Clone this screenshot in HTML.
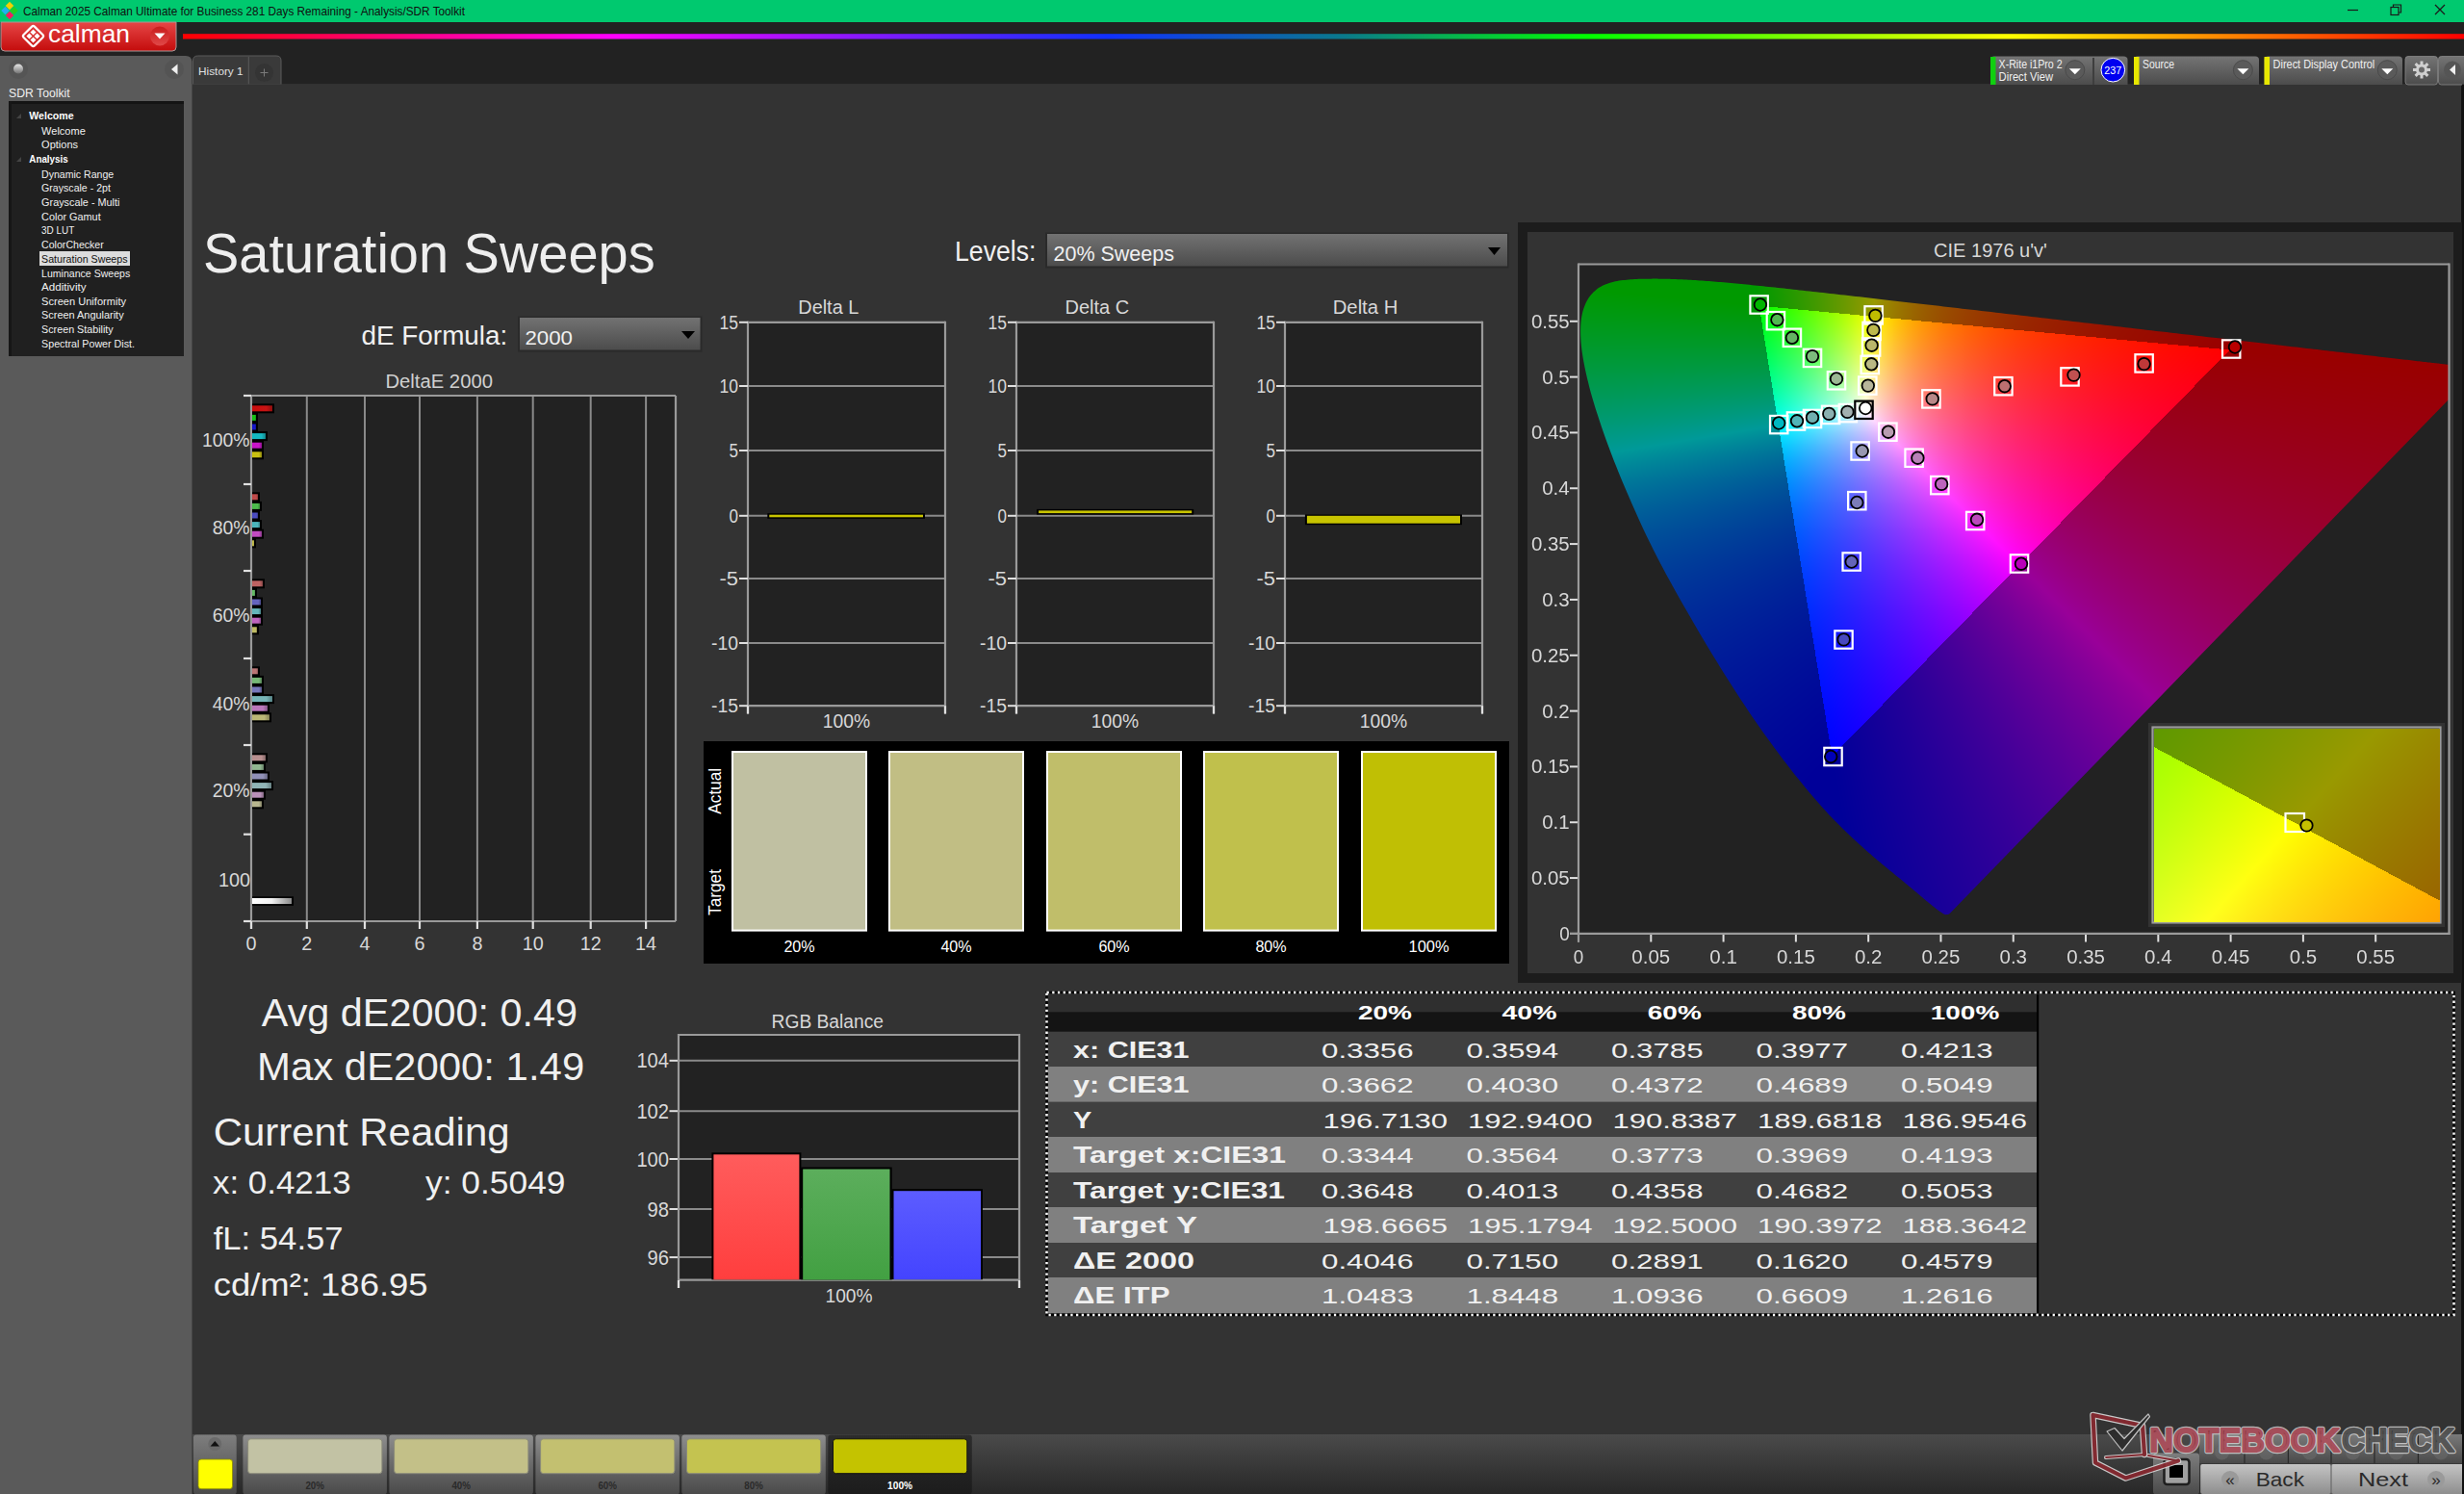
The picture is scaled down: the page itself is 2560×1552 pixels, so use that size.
<!DOCTYPE html>
<html><head><meta charset="utf-8"><title>Calman Saturation Sweeps</title>
<style>
html,body{margin:0;padding:0;width:2560px;height:1552px;overflow:hidden;background:#333;}
svg{position:absolute;left:0;top:0;}
svg text{font-family:"Liberation Sans",sans-serif;}
canvas{position:absolute;}
</style></head><body>
<svg width="2560" height="1552" viewBox="0 0 2560 1552"><defs><linearGradient id="rainbow" x1="0" y1="0" x2="1" y2="0"><stop offset="0" stop-color="#ff0000"/><stop offset="0.19" stop-color="#ff00ff"/><stop offset="0.405" stop-color="#1030ff"/><stop offset="0.51" stop-color="#0a7a8a"/><stop offset="0.616" stop-color="#00ff00"/><stop offset="0.8" stop-color="#ffff00"/><stop offset="1" stop-color="#ff0000"/></linearGradient><linearGradient id="calbtn" x1="0" y1="0" x2="0" y2="1"><stop offset="0" stop-color="#e64646"/><stop offset="1" stop-color="#c40c0c"/></linearGradient><linearGradient id="ddred" x1="0" y1="0" x2="0" y2="1"><stop offset="0" stop-color="#c81c1c"/><stop offset="1" stop-color="#e04848"/></linearGradient><linearGradient id="tbw" x1="0" y1="0" x2="0" y2="1"><stop offset="0" stop-color="#747474"/><stop offset="1" stop-color="#4c4c4c"/></linearGradient><linearGradient id="dd" x1="0" y1="0" x2="0" y2="1"><stop offset="0" stop-color="#727272"/><stop offset="1" stop-color="#4c4c4c"/></linearGradient><linearGradient id="strip" x1="0" y1="0" x2="0" y2="1"><stop offset="0" stop-color="#4a4a4a"/><stop offset="1" stop-color="#282828"/></linearGradient><linearGradient id="pbtn" x1="0" y1="0" x2="0" y2="1"><stop offset="0" stop-color="#8e8e8e"/><stop offset="0.5" stop-color="#6a6a6a"/><stop offset="1" stop-color="#4a4a4a"/></linearGradient><linearGradient id="pbtnsel" x1="0" y1="0" x2="0" y2="1"><stop offset="0" stop-color="#2c2c2c"/><stop offset="1" stop-color="#1c1c1c"/></linearGradient><linearGradient id="sbtn" x1="0" y1="0" x2="0" y2="1"><stop offset="0" stop-color="#7e7e7e"/><stop offset="1" stop-color="#4a4a4a"/></linearGradient><linearGradient id="bk" x1="0" y1="0" x2="0" y2="1"><stop offset="0" stop-color="#c4c4c4"/><stop offset="1" stop-color="#8e8e8e"/></linearGradient><linearGradient id="tbrow" x1="0" y1="0" x2="0" y2="1"><stop offset="0" stop-color="#7a7a7a"/><stop offset="1" stop-color="#4a4a4a"/></linearGradient><linearGradient id="ball" x1="0" y1="0" x2="0" y2="1"><stop offset="0" stop-color="#e8e8e8"/><stop offset="1" stop-color="#707070"/></linearGradient><linearGradient id="rbar" x1="0" y1="0" x2="0" y2="1"><stop offset="0" stop-color="#ff5c5c"/><stop offset="1" stop-color="#ff3e3e"/></linearGradient><linearGradient id="gbar" x1="0" y1="0" x2="0" y2="1"><stop offset="0" stop-color="#5cae5c"/><stop offset="1" stop-color="#42a042"/></linearGradient><linearGradient id="bbar" x1="0" y1="0" x2="0" y2="1"><stop offset="0" stop-color="#5c5cff"/><stop offset="1" stop-color="#4444ff"/></linearGradient><linearGradient id="bg0_0" x1="0" y1="0" x2="1" y2="0"><stop offset="0" stop-color="#c90c0c"/><stop offset="0.7" stop-color="#c81414"/><stop offset="1" stop-color="#900e0e"/></linearGradient><linearGradient id="bg0_1" x1="0" y1="0" x2="1" y2="0"><stop offset="0" stop-color="#10c010"/><stop offset="0.7" stop-color="#18c018"/><stop offset="1" stop-color="#118a11"/></linearGradient><linearGradient id="bg0_2" x1="0" y1="0" x2="1" y2="0"><stop offset="0" stop-color="#1010c9"/><stop offset="0.7" stop-color="#1818c8"/><stop offset="1" stop-color="#111190"/></linearGradient><linearGradient id="bg0_3" x1="0" y1="0" x2="1" y2="0"><stop offset="0" stop-color="#10b8c0"/><stop offset="0.7" stop-color="#18b8c0"/><stop offset="1" stop-color="#11848a"/></linearGradient><linearGradient id="bg0_4" x1="0" y1="0" x2="1" y2="0"><stop offset="0" stop-color="#c910c9"/><stop offset="0.7" stop-color="#c818c8"/><stop offset="1" stop-color="#901190"/></linearGradient><linearGradient id="bg0_5" x1="0" y1="0" x2="1" y2="0"><stop offset="0" stop-color="#c9c00c"/><stop offset="0.7" stop-color="#c8c014"/><stop offset="1" stop-color="#908a0e"/></linearGradient><linearGradient id="bg1_0" x1="0" y1="0" x2="1" y2="0"><stop offset="0" stop-color="#c14646"/><stop offset="0.7" stop-color="#c14c4c"/><stop offset="1" stop-color="#8a3636"/></linearGradient><linearGradient id="bg1_1" x1="0" y1="0" x2="1" y2="0"><stop offset="0" stop-color="#48bb48"/><stop offset="0.7" stop-color="#4ebb4e"/><stop offset="1" stop-color="#388638"/></linearGradient><linearGradient id="bg1_2" x1="0" y1="0" x2="1" y2="0"><stop offset="0" stop-color="#4848c1"/><stop offset="0.7" stop-color="#4e4ec1"/><stop offset="1" stop-color="#38388a"/></linearGradient><linearGradient id="bg1_3" x1="0" y1="0" x2="1" y2="0"><stop offset="0" stop-color="#48b6bb"/><stop offset="0.7" stop-color="#4eb6bb"/><stop offset="1" stop-color="#388386"/></linearGradient><linearGradient id="bg1_4" x1="0" y1="0" x2="1" y2="0"><stop offset="0" stop-color="#c148c1"/><stop offset="0.7" stop-color="#c14ec1"/><stop offset="1" stop-color="#8a388a"/></linearGradient><linearGradient id="bg1_5" x1="0" y1="0" x2="1" y2="0"><stop offset="0" stop-color="#c1bb46"/><stop offset="0.7" stop-color="#c1bb4c"/><stop offset="1" stop-color="#8a8636"/></linearGradient><linearGradient id="bg2_0" x1="0" y1="0" x2="1" y2="0"><stop offset="0" stop-color="#be6060"/><stop offset="0.7" stop-color="#be6464"/><stop offset="1" stop-color="#884848"/></linearGradient><linearGradient id="bg2_1" x1="0" y1="0" x2="1" y2="0"><stop offset="0" stop-color="#62ba62"/><stop offset="0.7" stop-color="#66ba66"/><stop offset="1" stop-color="#498549"/></linearGradient><linearGradient id="bg2_2" x1="0" y1="0" x2="1" y2="0"><stop offset="0" stop-color="#6262be"/><stop offset="0.7" stop-color="#6666be"/><stop offset="1" stop-color="#494988"/></linearGradient><linearGradient id="bg2_3" x1="0" y1="0" x2="1" y2="0"><stop offset="0" stop-color="#62b6ba"/><stop offset="0.7" stop-color="#66b6ba"/><stop offset="1" stop-color="#498385"/></linearGradient><linearGradient id="bg2_4" x1="0" y1="0" x2="1" y2="0"><stop offset="0" stop-color="#be62be"/><stop offset="0.7" stop-color="#be66be"/><stop offset="1" stop-color="#884988"/></linearGradient><linearGradient id="bg2_5" x1="0" y1="0" x2="1" y2="0"><stop offset="0" stop-color="#beba60"/><stop offset="0.7" stop-color="#beba64"/><stop offset="1" stop-color="#888548"/></linearGradient><linearGradient id="bg3_0" x1="0" y1="0" x2="1" y2="0"><stop offset="0" stop-color="#bb7373"/><stop offset="0.7" stop-color="#bb7777"/><stop offset="1" stop-color="#865555"/></linearGradient><linearGradient id="bg3_1" x1="0" y1="0" x2="1" y2="0"><stop offset="0" stop-color="#75b875"/><stop offset="0.7" stop-color="#78b878"/><stop offset="1" stop-color="#568456"/></linearGradient><linearGradient id="bg3_2" x1="0" y1="0" x2="1" y2="0"><stop offset="0" stop-color="#7575bb"/><stop offset="0.7" stop-color="#7878bb"/><stop offset="1" stop-color="#565686"/></linearGradient><linearGradient id="bg3_3" x1="0" y1="0" x2="1" y2="0"><stop offset="0" stop-color="#75b5b8"/><stop offset="0.7" stop-color="#78b5b8"/><stop offset="1" stop-color="#568284"/></linearGradient><linearGradient id="bg3_4" x1="0" y1="0" x2="1" y2="0"><stop offset="0" stop-color="#bb75bb"/><stop offset="0.7" stop-color="#bb78bb"/><stop offset="1" stop-color="#865686"/></linearGradient><linearGradient id="bg3_5" x1="0" y1="0" x2="1" y2="0"><stop offset="0" stop-color="#bbb873"/><stop offset="0.7" stop-color="#bbb877"/><stop offset="1" stop-color="#868455"/></linearGradient><linearGradient id="bg4_0" x1="0" y1="0" x2="1" y2="0"><stop offset="0" stop-color="#b88e8e"/><stop offset="0.7" stop-color="#b89090"/><stop offset="1" stop-color="#846767"/></linearGradient><linearGradient id="bg4_1" x1="0" y1="0" x2="1" y2="0"><stop offset="0" stop-color="#8fb68f"/><stop offset="0.7" stop-color="#91b691"/><stop offset="1" stop-color="#688368"/></linearGradient><linearGradient id="bg4_2" x1="0" y1="0" x2="1" y2="0"><stop offset="0" stop-color="#8f8fb8"/><stop offset="0.7" stop-color="#9191b8"/><stop offset="1" stop-color="#686884"/></linearGradient><linearGradient id="bg4_3" x1="0" y1="0" x2="1" y2="0"><stop offset="0" stop-color="#8fb4b6"/><stop offset="0.7" stop-color="#91b4b6"/><stop offset="1" stop-color="#688183"/></linearGradient><linearGradient id="bg4_4" x1="0" y1="0" x2="1" y2="0"><stop offset="0" stop-color="#b88fb8"/><stop offset="0.7" stop-color="#b891b8"/><stop offset="1" stop-color="#846884"/></linearGradient><linearGradient id="bg4_5" x1="0" y1="0" x2="1" y2="0"><stop offset="0" stop-color="#b8b68e"/><stop offset="0.7" stop-color="#b8b690"/><stop offset="1" stop-color="#848367"/></linearGradient><linearGradient id="greybar" x1="0" y1="0" x2="1" y2="0"><stop offset="0" stop-color="#ffffff"/><stop offset="0.5" stop-color="#f0f0f0"/><stop offset="1" stop-color="#8a8a8a"/></linearGradient></defs><rect x="0" y="0" width="2560" height="1552" fill="#333333" />
<rect x="0" y="0" width="2560" height="23" fill="#00c96f" />
<rect x="0" y="23" width="2560" height="64" fill="#222222" />
<g><rect x="7" y="3" width="6" height="6" fill="#f2d000" transform="rotate(45 10 6)"/><rect x="2.5" y="8" width="6" height="6" fill="#22b0f0" transform="rotate(45 5.5 11)"/><rect x="11.5" y="8" width="6" height="6" fill="#20d020" transform="rotate(45 14.5 11)"/><rect x="7" y="13" width="6" height="6" fill="#f02060" transform="rotate(45 10 16)"/></g>
<text x="24" y="16" font-size="13" fill="#101010" textLength="459" lengthAdjust="spacingAndGlyphs" >Calman 2025 Calman Ultimate for Business 281 Days Remaining  - Analysis/SDR Toolkit</text>
<line x1="2439" y1="10.5" x2="2450" y2="10.5" stroke="#1a1a1a" stroke-width="1.2" />
<rect x="2484" y="7.5" width="8" height="8" fill="none" stroke="#1a1a1a" stroke-width="1.2"/><path d="M2486.5 7.5 V5 H2494.5 V13 H2492" fill="none" stroke="#1a1a1a" stroke-width="1.2"/>
<path d="M2530 5 L2540 15 M2540 5 L2530 15" stroke="#1a1a1a" stroke-width="1.3"/>
<path d="M1 23 H183 V49 Q183 53 179 53 H5 Q1 53 1 49 Z" fill="url(#calbtn)" stroke="#a89898" stroke-width="1"/>
<g transform="translate(34.5,37.5) rotate(45)" fill="none" stroke="#fff" stroke-width="2.2"><rect x="-8" y="-8" width="16" height="16" rx="2"/></g>
<g transform="translate(34.5,37.5) rotate(45)" fill="#fff"><rect x="-5" y="-5" width="4.3" height="4.3"/><rect x="0.7" y="-5" width="4.3" height="4.3"/><rect x="-5" y="0.7" width="4.3" height="4.3"/><rect x="0.7" y="0.7" width="4.3" height="4.3"/></g>
<text x="50" y="43.7" font-size="26" fill="#ffffff" textLength="85" lengthAdjust="spacingAndGlyphs" >calman</text>
<circle cx="166" cy="37.5" r="10" fill="url(#ddred)"/><path d="M160.5 34.5 H171.5 L166 40.5 Z" fill="#fff"/>
<rect x="190" y="35.2" width="2370" height="5.3" fill="url(#rainbow)" />
<path d="M0 58 H193 Q199 58 199.5 64 V1552 H0 Z" fill="#5a5a5a"/>
<circle cx="19" cy="72" r="10" fill="#555"/><circle cx="19" cy="71.5" r="5" fill="url(#ball)"/>
<circle cx="181" cy="72" r="10" fill="#545454"/><path d="M178 72 L184.5 66.5 V77.5 Z" fill="#f0f0f0"/>
<text x="9" y="100.6" font-size="12.5" fill="#f0f0f0" textLength="63.7" lengthAdjust="spacingAndGlyphs" >SDR Toolkit</text>
<rect x="9" y="105" width="182" height="265" fill="#202020" />
<rect x="9" y="105" width="182" height="3" fill="#141414" />
<rect x="9" y="105" width="3" height="265" fill="#161616" />
<path d="M17 123 L22 118 V123 Z" fill="#444"/><path d="M17 168 L22 163 V168 Z" fill="#444"/>
<text x="30.3" y="124.3" font-size="10.5" fill="#ffffff" font-weight="bold" textLength="46.4" lengthAdjust="spacingAndGlyphs" >Welcome</text>
<text x="43.1" y="140" font-size="10.5" fill="#f0f0f0" textLength="45.7" lengthAdjust="spacingAndGlyphs" >Welcome</text>
<text x="43.1" y="154.2" font-size="10.5" fill="#f0f0f0" textLength="37.9" lengthAdjust="spacingAndGlyphs" >Options</text>
<text x="30.3" y="169.2" font-size="10.5" fill="#ffffff" font-weight="bold" textLength="40.4" lengthAdjust="spacingAndGlyphs" >Analysis</text>
<text x="43.1" y="185" font-size="10.5" fill="#f0f0f0" textLength="75.1" lengthAdjust="spacingAndGlyphs" >Dynamic Range</text>
<text x="43.1" y="199.2" font-size="10.5" fill="#f0f0f0" textLength="71.8" lengthAdjust="spacingAndGlyphs" >Grayscale - 2pt</text>
<text x="43.1" y="214.3" font-size="10.5" fill="#f0f0f0" textLength="81.3" lengthAdjust="spacingAndGlyphs" >Grayscale - Multi</text>
<text x="43.1" y="228.8" font-size="10.5" fill="#f0f0f0" textLength="61.6" lengthAdjust="spacingAndGlyphs" >Color Gamut</text>
<text x="43.1" y="243.3" font-size="10.5" fill="#f0f0f0" textLength="34.2" lengthAdjust="spacingAndGlyphs" >3D LUT</text>
<text x="43.1" y="258.2" font-size="10.5" fill="#f0f0f0" textLength="64.7" lengthAdjust="spacingAndGlyphs" >ColorChecker</text>
<rect x="41" y="261" width="94" height="15" fill="#dcdcdc" />
<text x="43.1" y="273" font-size="10.5" fill="#101010" textLength="89.4" lengthAdjust="spacingAndGlyphs" >Saturation Sweeps</text>
<text x="43.1" y="287.5" font-size="10.5" fill="#f0f0f0" textLength="92.1" lengthAdjust="spacingAndGlyphs" >Luminance Sweeps</text>
<text x="43.1" y="302.4" font-size="10.5" fill="#f0f0f0" textLength="46.4" lengthAdjust="spacingAndGlyphs" >Additivity</text>
<text x="43.1" y="316.8" font-size="10.5" fill="#f0f0f0" textLength="87.9" lengthAdjust="spacingAndGlyphs" >Screen Uniformity</text>
<text x="43.1" y="331.2" font-size="10.5" fill="#f0f0f0" textLength="85.5" lengthAdjust="spacingAndGlyphs" >Screen Angularity</text>
<text x="43.1" y="345.9" font-size="10.5" fill="#f0f0f0" textLength="74.6" lengthAdjust="spacingAndGlyphs" >Screen Stability</text>
<text x="43.1" y="360.7" font-size="10.5" fill="#f0f0f0" textLength="96.9" lengthAdjust="spacingAndGlyphs" >Spectral Power Dist.</text>
<path d="M200.5 88 V63 Q200.5 58 205.5 58 H287 Q292 58 292 63 V88 Z" fill="#3a3a3a" stroke="#5a5a5a" stroke-width="1"/>
<line x1="258.3" y1="59" x2="258.3" y2="88" stroke="#5a5a5a" stroke-width="1" />
<text x="206.1" y="77.8" font-size="11.5" fill="#e0e0e0" textLength="46.5" lengthAdjust="spacingAndGlyphs" >History 1</text>
<circle cx="274.5" cy="75.5" r="9.5" fill="#343434"/><path d="M270.5 75.5 H278.5 M274.5 71.5 V79.5" stroke="#7a7a7a" stroke-width="1"/>
<rect x="200" y="87.5" width="2360" height="1465" fill="#333333" />
<rect x="2557" y="87.5" width="3" height="1465" fill="#141414" />
<path d="M2068 88 V62 Q2068 58.5 2072 58.5 H2206 Q2210.5 58.5 2210.5 62 V88 Z" fill="url(#tbw)"/>
<rect x="2068" y="59" width="5.5" height="29" fill="#10d010" />
<text x="2076.6" y="70.6" font-size="12.5" fill="#f0f0f0" textLength="66" lengthAdjust="spacingAndGlyphs" >X-Rite i1Pro 2</text>
<text x="2076.6" y="84.4" font-size="12.5" fill="#f0f0f0" textLength="56.4" lengthAdjust="spacingAndGlyphs" >Direct View</text>
<circle cx="2155.8" cy="72.7" r="10" fill="#5a5a5a" stroke="#4a4a4a" stroke-width="1"/><path d="M2149.8 71.2 H2161.8 L2155.8 77.2 Z" fill="#fff"/>
<line x1="2175" y1="60" x2="2175" y2="88" stroke="#3e3e3e" stroke-width="2" />
<circle cx="2195.3" cy="72.7" r="12.3" fill="#0000f0" stroke="#ffffff" stroke-width="1"/>
<text x="2195.3" y="77" font-size="11" fill="#ffffff" text-anchor="middle" textLength="18" lengthAdjust="spacingAndGlyphs" >237</text>
<path d="M2217 88 V62 Q2217 58.5 2221 58.5 H2343 Q2347 58.5 2347 62 V88 Z" fill="url(#tbw)"/>
<rect x="2217" y="59" width="5.5" height="29" fill="#e8e800" />
<text x="2226" y="70.6" font-size="12.5" fill="#f0f0f0" textLength="33" lengthAdjust="spacingAndGlyphs" >Source</text>
<circle cx="2330.4" cy="72.7" r="10" fill="#5a5a5a" stroke="#4a4a4a" stroke-width="1"/><path d="M2324.4 71.2 H2336.4 L2330.4 77.2 Z" fill="#fff"/>
<path d="M2352.5 88 V62 Q2352.5 58.5 2356.5 58.5 H2492 Q2496 58.5 2496 62 V88 Z" fill="url(#tbw)"/>
<rect x="2352.5" y="59" width="5.5" height="29" fill="#e8e800" />
<text x="2361.6" y="70.6" font-size="12.5" fill="#f0f0f0" textLength="105.7" lengthAdjust="spacingAndGlyphs" >Direct Display Control</text>
<circle cx="2480.3" cy="72.7" r="10" fill="#5a5a5a" stroke="#4a4a4a" stroke-width="1"/><path d="M2474.3 71.2 H2486.3 L2480.3 77.2 Z" fill="#fff"/>
<rect x="2499" y="58.5" width="33.5" height="29.5" rx="3" fill="url(#tbw)" stroke="#888" stroke-width="0.8"/>
<g transform="translate(2516,72.5)" fill="#d0d0d0"><circle r="6"/><g stroke="#d0d0d0" stroke-width="3"><line x1="0" y1="-9" x2="0" y2="9"/><line x1="-9" y1="0" x2="9" y2="0"/><line x1="-6.4" y1="-6.4" x2="6.4" y2="6.4"/><line x1="-6.4" y1="6.4" x2="6.4" y2="-6.4"/></g><circle r="3" fill="#6a6a6a"/></g>
<rect x="2533.5" y="58.5" width="30" height="29.5" rx="3" fill="url(#tbw)" stroke="#888" stroke-width="0.8"/>
<circle cx="2548" cy="72.5" r="9" fill="#555"/><path d="M2545 72.5 L2551 67 V78 Z" fill="#f0f0f0"/>
<text x="211" y="282.5" font-size="57" fill="#eeeeee" textLength="469.7" lengthAdjust="spacingAndGlyphs" >Saturation Sweeps</text>
<text x="992" y="271.4" font-size="29" fill="#f0f0f0" textLength="84.4" lengthAdjust="spacingAndGlyphs" >Levels:</text>
<rect x="1086" y="241.5" width="481.5" height="37" fill="#2a2a2a" />
<rect x="1088" y="243" width="478" height="33.5" fill="url(#dd)" />
<text x="1094.5" y="271.2" font-size="21.8" fill="#f0f0f0" textLength="125.5" lengthAdjust="spacingAndGlyphs" >20% Sweeps</text>
<path d="M1546 257 H1559 L1552.5 265 Z" fill="#000"/>
<text x="375.5" y="357.5" font-size="27" fill="#f0f0f0" textLength="151.8" lengthAdjust="spacingAndGlyphs" >dE Formula:</text>
<rect x="538" y="328.6" width="191.5" height="37" fill="#2a2a2a" />
<rect x="540" y="330" width="187.5" height="33.5" fill="url(#dd)" />
<text x="545.5" y="357.5" font-size="20.7" fill="#f0f0f0" textLength="49.5" lengthAdjust="spacingAndGlyphs" >2000</text>
<path d="M708 344 H722 L715 352 Z" fill="#000"/>
<text x="456.2" y="402.5" font-size="20" fill="#d0d0d0" text-anchor="middle" textLength="111.5" lengthAdjust="spacingAndGlyphs" >DeltaE 2000</text>
<rect x="261" y="411" width="441" height="546" fill="#222222" />
<line x1="318.8" y1="411" x2="318.8" y2="957" stroke="#8a8a8a" stroke-width="2" />
<line x1="379" y1="411" x2="379" y2="957" stroke="#8a8a8a" stroke-width="2" />
<line x1="436" y1="411" x2="436" y2="957" stroke="#8a8a8a" stroke-width="2" />
<line x1="495.9" y1="411" x2="495.9" y2="957" stroke="#8a8a8a" stroke-width="2" />
<line x1="553.7" y1="411" x2="553.7" y2="957" stroke="#8a8a8a" stroke-width="2" />
<line x1="613.7" y1="411" x2="613.7" y2="957" stroke="#8a8a8a" stroke-width="2" />
<line x1="671.1" y1="411" x2="671.1" y2="957" stroke="#8a8a8a" stroke-width="2" />
<line x1="261" y1="411" x2="702" y2="411" stroke="#9a9a9a" stroke-width="2.2" />
<line x1="702" y1="411" x2="702" y2="957" stroke="#9a9a9a" stroke-width="2.2" />
<line x1="253" y1="957" x2="702" y2="957" stroke="#9a9a9a" stroke-width="2.2" />
<line x1="261" y1="410" x2="261" y2="965" stroke="#9a9a9a" stroke-width="2.2" />
<line x1="253" y1="411" x2="261" y2="411" stroke="#e0e0e0" stroke-width="2.2" />
<line x1="253" y1="503" x2="261" y2="503" stroke="#e0e0e0" stroke-width="2.2" />
<line x1="253" y1="593" x2="261" y2="593" stroke="#e0e0e0" stroke-width="2.2" />
<line x1="253" y1="684" x2="261" y2="684" stroke="#e0e0e0" stroke-width="2.2" />
<line x1="253" y1="774" x2="261" y2="774" stroke="#e0e0e0" stroke-width="2.2" />
<line x1="253" y1="866.7" x2="261" y2="866.7" stroke="#e0e0e0" stroke-width="2.2" />
<line x1="253" y1="957" x2="261" y2="957" stroke="#e0e0e0" stroke-width="2.2" />
<line x1="261" y1="957" x2="261" y2="965" stroke="#e0e0e0" stroke-width="2.2" />
<text x="261" y="986.6" font-size="20" fill="#d8d8d8" text-anchor="middle" textLength="11" lengthAdjust="spacingAndGlyphs" >0</text>
<line x1="318.8" y1="957" x2="318.8" y2="965" stroke="#e0e0e0" stroke-width="2.2" />
<text x="318.8" y="986.6" font-size="20" fill="#d8d8d8" text-anchor="middle" textLength="11" lengthAdjust="spacingAndGlyphs" >2</text>
<line x1="379" y1="957" x2="379" y2="965" stroke="#e0e0e0" stroke-width="2.2" />
<text x="379" y="986.6" font-size="20" fill="#d8d8d8" text-anchor="middle" textLength="11" lengthAdjust="spacingAndGlyphs" >4</text>
<line x1="436" y1="957" x2="436" y2="965" stroke="#e0e0e0" stroke-width="2.2" />
<text x="436" y="986.6" font-size="20" fill="#d8d8d8" text-anchor="middle" textLength="11" lengthAdjust="spacingAndGlyphs" >6</text>
<line x1="495.9" y1="957" x2="495.9" y2="965" stroke="#e0e0e0" stroke-width="2.2" />
<text x="495.9" y="986.6" font-size="20" fill="#d8d8d8" text-anchor="middle" textLength="11" lengthAdjust="spacingAndGlyphs" >8</text>
<line x1="553.7" y1="957" x2="553.7" y2="965" stroke="#e0e0e0" stroke-width="2.2" />
<text x="553.7" y="986.6" font-size="20" fill="#d8d8d8" text-anchor="middle" textLength="22" lengthAdjust="spacingAndGlyphs" >10</text>
<line x1="613.7" y1="957" x2="613.7" y2="965" stroke="#e0e0e0" stroke-width="2.2" />
<text x="613.7" y="986.6" font-size="20" fill="#d8d8d8" text-anchor="middle" textLength="22" lengthAdjust="spacingAndGlyphs" >12</text>
<line x1="671.1" y1="957" x2="671.1" y2="965" stroke="#e0e0e0" stroke-width="2.2" />
<text x="671.1" y="986.6" font-size="20" fill="#d8d8d8" text-anchor="middle" textLength="22" lengthAdjust="spacingAndGlyphs" >14</text>
<text x="259.6" y="463.6" font-size="20.5" fill="#d8d8d8" text-anchor="end" textLength="49.6" lengthAdjust="spacingAndGlyphs" >100%</text>
<text x="259.6" y="554.9" font-size="20.5" fill="#d8d8d8" text-anchor="end" textLength="38.9" lengthAdjust="spacingAndGlyphs" >80%</text>
<text x="259.6" y="646.3" font-size="20.5" fill="#d8d8d8" text-anchor="end" textLength="38.9" lengthAdjust="spacingAndGlyphs" >60%</text>
<text x="259.6" y="737.8" font-size="20.5" fill="#d8d8d8" text-anchor="end" textLength="38.9" lengthAdjust="spacingAndGlyphs" >40%</text>
<text x="259.6" y="827.7" font-size="20.5" fill="#d8d8d8" text-anchor="end" textLength="38.9" lengthAdjust="spacingAndGlyphs" >20%</text>
<text x="260" y="921" font-size="20.5" fill="#d8d8d8" text-anchor="end" textLength="33.1" lengthAdjust="spacingAndGlyphs" >100</text>
<rect x="262" y="419.3" width="23" height="10" fill="#000" />
<rect x="262" y="428.9" width="6" height="10" fill="#000" />
<rect x="262" y="438.5" width="6" height="10" fill="#000" />
<rect x="262" y="448.1" width="16" height="10" fill="#000" />
<rect x="262" y="457.7" width="12" height="10" fill="#000" />
<rect x="262" y="467.3" width="12" height="10" fill="#000" />
<rect x="262" y="421.3" width="21" height="6" fill="url(#bg0_0)" />
<rect x="262" y="430.9" width="4" height="6" fill="url(#bg0_1)" />
<rect x="262" y="440.5" width="4" height="6" fill="url(#bg0_2)" />
<rect x="262" y="450.1" width="14" height="6" fill="url(#bg0_3)" />
<rect x="262" y="459.7" width="10" height="6" fill="url(#bg0_4)" />
<rect x="262" y="469.3" width="10" height="6" fill="url(#bg0_5)" />
<rect x="262" y="511.3" width="8" height="10" fill="#000" />
<rect x="262" y="520.9" width="10" height="10" fill="#000" />
<rect x="262" y="530.5" width="8" height="10" fill="#000" />
<rect x="262" y="540.1" width="10" height="10" fill="#000" />
<rect x="262" y="549.7" width="12" height="10" fill="#000" />
<rect x="262" y="559.3" width="4" height="10" fill="#000" />
<rect x="262" y="513.3" width="6" height="6" fill="url(#bg1_0)" />
<rect x="262" y="522.9" width="8" height="6" fill="url(#bg1_1)" />
<rect x="262" y="532.5" width="6" height="6" fill="url(#bg1_2)" />
<rect x="262" y="542.1" width="8" height="6" fill="url(#bg1_3)" />
<rect x="262" y="551.7" width="10" height="6" fill="url(#bg1_4)" />
<rect x="262" y="561.3" width="2" height="6" fill="url(#bg1_5)" />
<rect x="262" y="601.3" width="13" height="10" fill="#000" />
<rect x="262" y="610.9" width="5" height="10" fill="#000" />
<rect x="262" y="620.5" width="11" height="10" fill="#000" />
<rect x="262" y="630.1" width="11" height="10" fill="#000" />
<rect x="262" y="639.7" width="11" height="10" fill="#000" />
<rect x="262" y="649.3" width="7" height="10" fill="#000" />
<rect x="262" y="603.3" width="11" height="6" fill="url(#bg2_0)" />
<rect x="262" y="612.9" width="3" height="6" fill="url(#bg2_1)" />
<rect x="262" y="622.5" width="9" height="6" fill="url(#bg2_2)" />
<rect x="262" y="632.1" width="9" height="6" fill="url(#bg2_3)" />
<rect x="262" y="641.7" width="9" height="6" fill="url(#bg2_4)" />
<rect x="262" y="651.3" width="5" height="6" fill="url(#bg2_5)" />
<rect x="262" y="692.3" width="8" height="10" fill="#000" />
<rect x="262" y="701.9" width="12" height="10" fill="#000" />
<rect x="262" y="711.5" width="12" height="10" fill="#000" />
<rect x="262" y="721.1" width="23" height="10" fill="#000" />
<rect x="262" y="730.7" width="18" height="10" fill="#000" />
<rect x="262" y="740.3" width="20" height="10" fill="#000" />
<rect x="262" y="694.3" width="6" height="6" fill="url(#bg3_0)" />
<rect x="262" y="703.9" width="10" height="6" fill="url(#bg3_1)" />
<rect x="262" y="713.5" width="10" height="6" fill="url(#bg3_2)" />
<rect x="262" y="723.1" width="21" height="6" fill="url(#bg3_3)" />
<rect x="262" y="732.7" width="16" height="6" fill="url(#bg3_4)" />
<rect x="262" y="742.3" width="18" height="6" fill="url(#bg3_5)" />
<rect x="262" y="782.3" width="16" height="10" fill="#000" />
<rect x="262" y="791.9" width="14" height="10" fill="#000" />
<rect x="262" y="801.5" width="18" height="10" fill="#000" />
<rect x="262" y="811.1" width="22" height="10" fill="#000" />
<rect x="262" y="820.7" width="14" height="10" fill="#000" />
<rect x="262" y="830.3" width="12" height="10" fill="#000" />
<rect x="262" y="784.3" width="14" height="6" fill="url(#bg4_0)" />
<rect x="262" y="793.9" width="12" height="6" fill="url(#bg4_1)" />
<rect x="262" y="803.5" width="16" height="6" fill="url(#bg4_2)" />
<rect x="262" y="813.1" width="20" height="6" fill="url(#bg4_3)" />
<rect x="262" y="822.7" width="12" height="6" fill="url(#bg4_4)" />
<rect x="262" y="832.3" width="10" height="6" fill="url(#bg4_5)" />
<rect x="262" y="931.3" width="43" height="9.5" fill="#000" />
<rect x="262" y="933" width="41" height="6" fill="url(#greybar)" />
<text x="860.8" y="326.1" font-size="20.5" fill="#d8d8d8" text-anchor="middle" textLength="63" lengthAdjust="spacingAndGlyphs" >Delta L</text>
<rect x="777" y="334.8" width="205" height="398.4" fill="#222222" />
<line x1="777" y1="401" x2="982" y2="401" stroke="#8a8a8a" stroke-width="2" />
<line x1="777" y1="468" x2="982" y2="468" stroke="#8a8a8a" stroke-width="2" />
<line x1="777" y1="535.8" x2="982" y2="535.8" stroke="#8a8a8a" stroke-width="2" />
<line x1="777" y1="601" x2="982" y2="601" stroke="#8a8a8a" stroke-width="2" />
<line x1="777" y1="668" x2="982" y2="668" stroke="#8a8a8a" stroke-width="2" />
<line x1="777" y1="334.8" x2="982" y2="334.8" stroke="#9a9a9a" stroke-width="2.2" />
<line x1="777" y1="733.2" x2="982" y2="733.2" stroke="#9a9a9a" stroke-width="2.2" />
<line x1="777" y1="333.7" x2="777" y2="741.5" stroke="#9a9a9a" stroke-width="2.2" />
<line x1="982" y1="333.7" x2="982" y2="741.5" stroke="#9a9a9a" stroke-width="2.2" />
<line x1="777" y1="733.2" x2="777" y2="741.5" stroke="#e0e0e0" stroke-width="2.2" />
<line x1="982" y1="733.2" x2="982" y2="741.5" stroke="#e0e0e0" stroke-width="2.2" />
<line x1="768" y1="334.8" x2="777" y2="334.8" stroke="#e0e0e0" stroke-width="2" />
<text x="767" y="341.8" font-size="19.5" fill="#d8d8d8" text-anchor="end" textLength="19.5" lengthAdjust="spacingAndGlyphs" >15</text>
<line x1="768" y1="401" x2="777" y2="401" stroke="#e0e0e0" stroke-width="2" />
<text x="767" y="408" font-size="19.5" fill="#d8d8d8" text-anchor="end" textLength="19.5" lengthAdjust="spacingAndGlyphs" >10</text>
<line x1="768" y1="468" x2="777" y2="468" stroke="#e0e0e0" stroke-width="2" />
<text x="767" y="475" font-size="19.5" fill="#d8d8d8" text-anchor="end" textLength="9.5" lengthAdjust="spacingAndGlyphs" >5</text>
<line x1="768" y1="535.8" x2="777" y2="535.8" stroke="#e0e0e0" stroke-width="2" />
<text x="767" y="542.8" font-size="19.5" fill="#d8d8d8" text-anchor="end" textLength="9.5" lengthAdjust="spacingAndGlyphs" >0</text>
<line x1="768" y1="601" x2="777" y2="601" stroke="#e0e0e0" stroke-width="2" />
<text x="767" y="608" font-size="19.5" fill="#d8d8d8" text-anchor="end" textLength="19.5" lengthAdjust="spacingAndGlyphs" >-5</text>
<line x1="768" y1="668" x2="777" y2="668" stroke="#e0e0e0" stroke-width="2" />
<text x="767" y="675" font-size="19.5" fill="#d8d8d8" text-anchor="end" textLength="28" lengthAdjust="spacingAndGlyphs" >-10</text>
<line x1="768" y1="733.2" x2="777" y2="733.2" stroke="#e0e0e0" stroke-width="2" />
<text x="767" y="740.2" font-size="19.5" fill="#d8d8d8" text-anchor="end" textLength="28" lengthAdjust="spacingAndGlyphs" >-15</text>
<text x="879.5" y="755.5" font-size="20.4" fill="#d8d8d8" text-anchor="middle" textLength="49.3" lengthAdjust="spacingAndGlyphs" >100%</text>
<rect x="797.3" y="533.2" width="163.7" height="5.6" fill="#000" />
<rect x="799.3" y="534.7" width="159.7" height="2.6" fill="#c8c400" />
<text x="1139.8" y="326.1" font-size="20.5" fill="#d8d8d8" text-anchor="middle" textLength="66.7" lengthAdjust="spacingAndGlyphs" >Delta C</text>
<rect x="1056" y="334.8" width="205" height="398.4" fill="#222222" />
<line x1="1056" y1="401" x2="1261" y2="401" stroke="#8a8a8a" stroke-width="2" />
<line x1="1056" y1="468" x2="1261" y2="468" stroke="#8a8a8a" stroke-width="2" />
<line x1="1056" y1="535.8" x2="1261" y2="535.8" stroke="#8a8a8a" stroke-width="2" />
<line x1="1056" y1="601" x2="1261" y2="601" stroke="#8a8a8a" stroke-width="2" />
<line x1="1056" y1="668" x2="1261" y2="668" stroke="#8a8a8a" stroke-width="2" />
<line x1="1056" y1="334.8" x2="1261" y2="334.8" stroke="#9a9a9a" stroke-width="2.2" />
<line x1="1056" y1="733.2" x2="1261" y2="733.2" stroke="#9a9a9a" stroke-width="2.2" />
<line x1="1056" y1="333.7" x2="1056" y2="741.5" stroke="#9a9a9a" stroke-width="2.2" />
<line x1="1261" y1="333.7" x2="1261" y2="741.5" stroke="#9a9a9a" stroke-width="2.2" />
<line x1="1056" y1="733.2" x2="1056" y2="741.5" stroke="#e0e0e0" stroke-width="2.2" />
<line x1="1261" y1="733.2" x2="1261" y2="741.5" stroke="#e0e0e0" stroke-width="2.2" />
<line x1="1047" y1="334.8" x2="1056" y2="334.8" stroke="#e0e0e0" stroke-width="2" />
<text x="1046" y="341.8" font-size="19.5" fill="#d8d8d8" text-anchor="end" textLength="19.5" lengthAdjust="spacingAndGlyphs" >15</text>
<line x1="1047" y1="401" x2="1056" y2="401" stroke="#e0e0e0" stroke-width="2" />
<text x="1046" y="408" font-size="19.5" fill="#d8d8d8" text-anchor="end" textLength="19.5" lengthAdjust="spacingAndGlyphs" >10</text>
<line x1="1047" y1="468" x2="1056" y2="468" stroke="#e0e0e0" stroke-width="2" />
<text x="1046" y="475" font-size="19.5" fill="#d8d8d8" text-anchor="end" textLength="9.5" lengthAdjust="spacingAndGlyphs" >5</text>
<line x1="1047" y1="535.8" x2="1056" y2="535.8" stroke="#e0e0e0" stroke-width="2" />
<text x="1046" y="542.8" font-size="19.5" fill="#d8d8d8" text-anchor="end" textLength="9.5" lengthAdjust="spacingAndGlyphs" >0</text>
<line x1="1047" y1="601" x2="1056" y2="601" stroke="#e0e0e0" stroke-width="2" />
<text x="1046" y="608" font-size="19.5" fill="#d8d8d8" text-anchor="end" textLength="19.5" lengthAdjust="spacingAndGlyphs" >-5</text>
<line x1="1047" y1="668" x2="1056" y2="668" stroke="#e0e0e0" stroke-width="2" />
<text x="1046" y="675" font-size="19.5" fill="#d8d8d8" text-anchor="end" textLength="28" lengthAdjust="spacingAndGlyphs" >-10</text>
<line x1="1047" y1="733.2" x2="1056" y2="733.2" stroke="#e0e0e0" stroke-width="2" />
<text x="1046" y="740.2" font-size="19.5" fill="#d8d8d8" text-anchor="end" textLength="28" lengthAdjust="spacingAndGlyphs" >-15</text>
<text x="1158.5" y="755.5" font-size="20.4" fill="#d8d8d8" text-anchor="middle" textLength="49.3" lengthAdjust="spacingAndGlyphs" >100%</text>
<rect x="1077.1" y="528.9" width="163.1" height="5.7" fill="#000" />
<rect x="1079.1" y="530.4" width="159.1" height="2.7" fill="#c8c400" />
<text x="1418.5" y="326.1" font-size="20.5" fill="#d8d8d8" text-anchor="middle" textLength="67.5" lengthAdjust="spacingAndGlyphs" >Delta H</text>
<rect x="1335" y="334.8" width="205" height="398.4" fill="#222222" />
<line x1="1335" y1="401" x2="1540" y2="401" stroke="#8a8a8a" stroke-width="2" />
<line x1="1335" y1="468" x2="1540" y2="468" stroke="#8a8a8a" stroke-width="2" />
<line x1="1335" y1="535.8" x2="1540" y2="535.8" stroke="#8a8a8a" stroke-width="2" />
<line x1="1335" y1="601" x2="1540" y2="601" stroke="#8a8a8a" stroke-width="2" />
<line x1="1335" y1="668" x2="1540" y2="668" stroke="#8a8a8a" stroke-width="2" />
<line x1="1335" y1="334.8" x2="1540" y2="334.8" stroke="#9a9a9a" stroke-width="2.2" />
<line x1="1335" y1="733.2" x2="1540" y2="733.2" stroke="#9a9a9a" stroke-width="2.2" />
<line x1="1335" y1="333.7" x2="1335" y2="741.5" stroke="#9a9a9a" stroke-width="2.2" />
<line x1="1540" y1="333.7" x2="1540" y2="741.5" stroke="#9a9a9a" stroke-width="2.2" />
<line x1="1335" y1="733.2" x2="1335" y2="741.5" stroke="#e0e0e0" stroke-width="2.2" />
<line x1="1540" y1="733.2" x2="1540" y2="741.5" stroke="#e0e0e0" stroke-width="2.2" />
<line x1="1326" y1="334.8" x2="1335" y2="334.8" stroke="#e0e0e0" stroke-width="2" />
<text x="1325" y="341.8" font-size="19.5" fill="#d8d8d8" text-anchor="end" textLength="19.5" lengthAdjust="spacingAndGlyphs" >15</text>
<line x1="1326" y1="401" x2="1335" y2="401" stroke="#e0e0e0" stroke-width="2" />
<text x="1325" y="408" font-size="19.5" fill="#d8d8d8" text-anchor="end" textLength="19.5" lengthAdjust="spacingAndGlyphs" >10</text>
<line x1="1326" y1="468" x2="1335" y2="468" stroke="#e0e0e0" stroke-width="2" />
<text x="1325" y="475" font-size="19.5" fill="#d8d8d8" text-anchor="end" textLength="9.5" lengthAdjust="spacingAndGlyphs" >5</text>
<line x1="1326" y1="535.8" x2="1335" y2="535.8" stroke="#e0e0e0" stroke-width="2" />
<text x="1325" y="542.8" font-size="19.5" fill="#d8d8d8" text-anchor="end" textLength="9.5" lengthAdjust="spacingAndGlyphs" >0</text>
<line x1="1326" y1="601" x2="1335" y2="601" stroke="#e0e0e0" stroke-width="2" />
<text x="1325" y="608" font-size="19.5" fill="#d8d8d8" text-anchor="end" textLength="19.5" lengthAdjust="spacingAndGlyphs" >-5</text>
<line x1="1326" y1="668" x2="1335" y2="668" stroke="#e0e0e0" stroke-width="2" />
<text x="1325" y="675" font-size="19.5" fill="#d8d8d8" text-anchor="end" textLength="28" lengthAdjust="spacingAndGlyphs" >-10</text>
<line x1="1326" y1="733.2" x2="1335" y2="733.2" stroke="#e0e0e0" stroke-width="2" />
<text x="1325" y="740.2" font-size="19.5" fill="#d8d8d8" text-anchor="end" textLength="28" lengthAdjust="spacingAndGlyphs" >-15</text>
<text x="1437.5" y="755.5" font-size="20.4" fill="#d8d8d8" text-anchor="middle" textLength="49.3" lengthAdjust="spacingAndGlyphs" >100%</text>
<rect x="1355.9" y="534.3" width="163.1" height="10.9" fill="#000" />
<rect x="1357.9" y="535.8" width="159.1" height="7.9" fill="#c8c400" />
<rect x="731" y="770" width="837" height="231" fill="#000000" />
<rect x="760" y="780" width="141" height="187.6" fill="#ffffff" />
<rect x="762" y="782" width="137" height="183.6" fill="#c0c0a2" />
<text x="830.5" y="989.3" font-size="17" fill="#ffffff" text-anchor="middle" textLength="32.2" lengthAdjust="spacingAndGlyphs" >20%</text>
<rect x="923" y="780" width="141" height="187.6" fill="#ffffff" />
<rect x="925" y="782" width="137" height="183.6" fill="#c1be84" />
<text x="993.5" y="989.3" font-size="17" fill="#ffffff" text-anchor="middle" textLength="32.2" lengthAdjust="spacingAndGlyphs" >40%</text>
<rect x="1087" y="780" width="141" height="187.6" fill="#ffffff" />
<rect x="1089" y="782" width="137" height="183.6" fill="#c0be6a" />
<text x="1157.5" y="989.3" font-size="17" fill="#ffffff" text-anchor="middle" textLength="32.2" lengthAdjust="spacingAndGlyphs" >60%</text>
<rect x="1250" y="780" width="141" height="187.6" fill="#ffffff" />
<rect x="1252" y="782" width="137" height="183.6" fill="#c0c04c" />
<text x="1320.5" y="989.3" font-size="17" fill="#ffffff" text-anchor="middle" textLength="32.2" lengthAdjust="spacingAndGlyphs" >80%</text>
<rect x="1414" y="780" width="141" height="187.6" fill="#ffffff" />
<rect x="1416" y="782" width="137" height="183.6" fill="#c0bf04" />
<text x="1484.5" y="989.3" font-size="17" fill="#ffffff" text-anchor="middle" textLength="42" lengthAdjust="spacingAndGlyphs" >100%</text>
<text x="0" y="0" font-size="18" fill="#ffffff" text-anchor="middle" textLength="47.8" lengthAdjust="spacingAndGlyphs" transform="translate(749,821.8) rotate(-90)">Actual</text>
<text x="0" y="0" font-size="18" fill="#ffffff" text-anchor="middle" textLength="48" lengthAdjust="spacingAndGlyphs" transform="translate(749,927) rotate(-90)">Target</text>
<text x="271.8" y="1065.9" font-size="41" fill="#f0f0f0" textLength="328.2" lengthAdjust="spacingAndGlyphs" >Avg dE2000: 0.49</text>
<text x="267" y="1122" font-size="41" fill="#f0f0f0" textLength="340.2" lengthAdjust="spacingAndGlyphs" >Max dE2000: 1.49</text>
<text x="221.7" y="1190.2" font-size="41.3" fill="#f0f0f0" textLength="307.9" lengthAdjust="spacingAndGlyphs" >Current Reading</text>
<text x="221" y="1240" font-size="33.5" fill="#f0f0f0" textLength="143.6" lengthAdjust="spacingAndGlyphs" >x: 0.4213</text>
<text x="442" y="1240" font-size="33.5" fill="#f0f0f0" textLength="145.5" lengthAdjust="spacingAndGlyphs" >y: 0.5049</text>
<text x="221.7" y="1298" font-size="34" fill="#f0f0f0" textLength="134.9" lengthAdjust="spacingAndGlyphs" >fL: 54.57</text>
<text x="221.7" y="1345.7" font-size="34" fill="#f0f0f0" textLength="222.9" lengthAdjust="spacingAndGlyphs" >cd/m²: 186.95</text>
<text x="859.8" y="1067.6" font-size="19.5" fill="#d8d8d8" text-anchor="middle" textLength="116.4" lengthAdjust="spacingAndGlyphs" >RGB Balance</text>
<rect x="705" y="1075" width="354" height="255" fill="#222222" />
<line x1="705" y1="1101.8" x2="1059" y2="1101.8" stroke="#8a8a8a" stroke-width="2" />
<line x1="695.5" y1="1101.8" x2="705" y2="1101.8" stroke="#e0e0e0" stroke-width="2" />
<text x="695" y="1109.3" font-size="21.5" fill="#d8d8d8" text-anchor="end" textLength="33.6" lengthAdjust="spacingAndGlyphs" >104</text>
<line x1="705" y1="1154.2" x2="1059" y2="1154.2" stroke="#8a8a8a" stroke-width="2" />
<line x1="695.5" y1="1154.2" x2="705" y2="1154.2" stroke="#e0e0e0" stroke-width="2" />
<text x="695" y="1161.7" font-size="21.5" fill="#d8d8d8" text-anchor="end" textLength="33.6" lengthAdjust="spacingAndGlyphs" >102</text>
<line x1="705" y1="1204" x2="1059" y2="1204" stroke="#8a8a8a" stroke-width="2" />
<line x1="695.5" y1="1204" x2="705" y2="1204" stroke="#e0e0e0" stroke-width="2" />
<text x="695" y="1211.5" font-size="21.5" fill="#d8d8d8" text-anchor="end" textLength="33.6" lengthAdjust="spacingAndGlyphs" >100</text>
<line x1="705" y1="1256" x2="1059" y2="1256" stroke="#8a8a8a" stroke-width="2" />
<line x1="695.5" y1="1256" x2="705" y2="1256" stroke="#e0e0e0" stroke-width="2" />
<text x="695" y="1263.5" font-size="21.5" fill="#d8d8d8" text-anchor="end" textLength="22.5" lengthAdjust="spacingAndGlyphs" >98</text>
<line x1="705" y1="1306.1" x2="1059" y2="1306.1" stroke="#8a8a8a" stroke-width="2" />
<line x1="695.5" y1="1306.1" x2="705" y2="1306.1" stroke="#e0e0e0" stroke-width="2" />
<text x="695" y="1313.6" font-size="21.5" fill="#d8d8d8" text-anchor="end" textLength="22.5" lengthAdjust="spacingAndGlyphs" >96</text>
<line x1="705" y1="1075" x2="1059" y2="1075" stroke="#9a9a9a" stroke-width="2.2" />
<line x1="705" y1="1329.7" x2="1059" y2="1329.7" stroke="#9a9a9a" stroke-width="2.2" />
<line x1="705" y1="1074" x2="705" y2="1338" stroke="#9a9a9a" stroke-width="2.2" />
<line x1="1059" y1="1074" x2="1059" y2="1338" stroke="#9a9a9a" stroke-width="2.2" />
<line x1="705" y1="1330" x2="705" y2="1338" stroke="#e0e0e0" stroke-width="2.2" />
<line x1="1059" y1="1330" x2="1059" y2="1338" stroke="#e0e0e0" stroke-width="2.2" />
<rect x="739.4" y="1197.3" width="93" height="132" fill="#000" />
<rect x="832.2" y="1212.5" width="94.5" height="117" fill="#000" />
<rect x="926.5" y="1235.2" width="94.5" height="94" fill="#000" />
<rect x="741.4" y="1199.3" width="89" height="130" fill="url(#rbar)" />
<rect x="834.2" y="1214.5" width="90.3" height="115" fill="url(#gbar)" />
<rect x="928.5" y="1237.2" width="90.5" height="92" fill="url(#bbar)" />
<text x="882" y="1352.5" font-size="20" fill="#d8d8d8" text-anchor="middle" textLength="49" lengthAdjust="spacingAndGlyphs" >100%</text>
<rect x="1089" y="1033" width="1028" height="19" fill="#2f2f2f" />
<rect x="1089" y="1051.3" width="1028" height="20.5" fill="#141414" />
<rect x="1089" y="1071.8" width="1028" height="36.2" fill="#404040" />
<rect x="1089" y="1108" width="1028" height="36.8" fill="#808080" />
<rect x="1089" y="1144.8" width="1028" height="36.2" fill="#404040" />
<rect x="1089" y="1181" width="1028" height="37" fill="#808080" />
<rect x="1089" y="1218" width="1028" height="36" fill="#404040" />
<rect x="1089" y="1254" width="1028" height="37" fill="#808080" />
<rect x="1089" y="1291" width="1028" height="36" fill="#404040" />
<rect x="1089" y="1327" width="1028" height="37" fill="#808080" />
<text x="1115" y="1099" font-size="23" fill="#f0f0f0" font-weight="bold" textLength="120.5" lengthAdjust="spacingAndGlyphs" >x: CIE31</text>
<text x="1373" y="1099" font-size="22" fill="#f0f0f0" textLength="95.6" lengthAdjust="spacingAndGlyphs" >0.3356</text>
<text x="1523.5" y="1099" font-size="22" fill="#f0f0f0" textLength="95.6" lengthAdjust="spacingAndGlyphs" >0.3594</text>
<text x="1674" y="1099" font-size="22" fill="#f0f0f0" textLength="95.6" lengthAdjust="spacingAndGlyphs" >0.3785</text>
<text x="1824.5" y="1099" font-size="22" fill="#f0f0f0" textLength="95.6" lengthAdjust="spacingAndGlyphs" >0.3977</text>
<text x="1975" y="1099" font-size="22" fill="#f0f0f0" textLength="95.6" lengthAdjust="spacingAndGlyphs" >0.4213</text>
<text x="1115" y="1135.2" font-size="23" fill="#f0f0f0" font-weight="bold" textLength="120.5" lengthAdjust="spacingAndGlyphs" >y: CIE31</text>
<text x="1373" y="1135.2" font-size="22" fill="#f0f0f0" textLength="95.6" lengthAdjust="spacingAndGlyphs" >0.3662</text>
<text x="1523.5" y="1135.2" font-size="22" fill="#f0f0f0" textLength="95.6" lengthAdjust="spacingAndGlyphs" >0.4030</text>
<text x="1674" y="1135.2" font-size="22" fill="#f0f0f0" textLength="95.6" lengthAdjust="spacingAndGlyphs" >0.4372</text>
<text x="1824.5" y="1135.2" font-size="22" fill="#f0f0f0" textLength="95.6" lengthAdjust="spacingAndGlyphs" >0.4689</text>
<text x="1975" y="1135.2" font-size="22" fill="#f0f0f0" textLength="95.6" lengthAdjust="spacingAndGlyphs" >0.5049</text>
<text x="1115" y="1172" font-size="23" fill="#f0f0f0" font-weight="bold" textLength="19.3" lengthAdjust="spacingAndGlyphs" >Y</text>
<text x="1374.5" y="1172" font-size="22" fill="#f0f0f0" textLength="129.6" lengthAdjust="spacingAndGlyphs" >196.7130</text>
<text x="1525" y="1172" font-size="22" fill="#f0f0f0" textLength="129.6" lengthAdjust="spacingAndGlyphs" >192.9400</text>
<text x="1675.5" y="1172" font-size="22" fill="#f0f0f0" textLength="129.6" lengthAdjust="spacingAndGlyphs" >190.8387</text>
<text x="1826" y="1172" font-size="22" fill="#f0f0f0" textLength="129.6" lengthAdjust="spacingAndGlyphs" >189.6818</text>
<text x="1976.5" y="1172" font-size="22" fill="#f0f0f0" textLength="129.6" lengthAdjust="spacingAndGlyphs" >186.9546</text>
<text x="1115" y="1208.2" font-size="23" fill="#f0f0f0" font-weight="bold" textLength="221" lengthAdjust="spacingAndGlyphs" >Target x:CIE31</text>
<text x="1373" y="1208.2" font-size="22" fill="#f0f0f0" textLength="95.6" lengthAdjust="spacingAndGlyphs" >0.3344</text>
<text x="1523.5" y="1208.2" font-size="22" fill="#f0f0f0" textLength="95.6" lengthAdjust="spacingAndGlyphs" >0.3564</text>
<text x="1674" y="1208.2" font-size="22" fill="#f0f0f0" textLength="95.6" lengthAdjust="spacingAndGlyphs" >0.3773</text>
<text x="1824.5" y="1208.2" font-size="22" fill="#f0f0f0" textLength="95.6" lengthAdjust="spacingAndGlyphs" >0.3969</text>
<text x="1975" y="1208.2" font-size="22" fill="#f0f0f0" textLength="95.6" lengthAdjust="spacingAndGlyphs" >0.4193</text>
<text x="1115" y="1245.2" font-size="23" fill="#f0f0f0" font-weight="bold" textLength="220" lengthAdjust="spacingAndGlyphs" >Target y:CIE31</text>
<text x="1373" y="1245.2" font-size="22" fill="#f0f0f0" textLength="95.6" lengthAdjust="spacingAndGlyphs" >0.3648</text>
<text x="1523.5" y="1245.2" font-size="22" fill="#f0f0f0" textLength="95.6" lengthAdjust="spacingAndGlyphs" >0.4013</text>
<text x="1674" y="1245.2" font-size="22" fill="#f0f0f0" textLength="95.6" lengthAdjust="spacingAndGlyphs" >0.4358</text>
<text x="1824.5" y="1245.2" font-size="22" fill="#f0f0f0" textLength="95.6" lengthAdjust="spacingAndGlyphs" >0.4682</text>
<text x="1975" y="1245.2" font-size="22" fill="#f0f0f0" textLength="95.6" lengthAdjust="spacingAndGlyphs" >0.5053</text>
<text x="1115" y="1281.2" font-size="23" fill="#f0f0f0" font-weight="bold" textLength="128.9" lengthAdjust="spacingAndGlyphs" >Target Y</text>
<text x="1374.5" y="1281.2" font-size="22" fill="#f0f0f0" textLength="129.6" lengthAdjust="spacingAndGlyphs" >198.6665</text>
<text x="1525" y="1281.2" font-size="22" fill="#f0f0f0" textLength="129.6" lengthAdjust="spacingAndGlyphs" >195.1794</text>
<text x="1675.5" y="1281.2" font-size="22" fill="#f0f0f0" textLength="129.6" lengthAdjust="spacingAndGlyphs" >192.5000</text>
<text x="1826" y="1281.2" font-size="22" fill="#f0f0f0" textLength="129.6" lengthAdjust="spacingAndGlyphs" >190.3972</text>
<text x="1976.5" y="1281.2" font-size="22" fill="#f0f0f0" textLength="129.6" lengthAdjust="spacingAndGlyphs" >188.3642</text>
<text x="1115" y="1318.2" font-size="23" fill="#f0f0f0" font-weight="bold" textLength="126" lengthAdjust="spacingAndGlyphs" >ΔE 2000</text>
<text x="1373" y="1318.2" font-size="22" fill="#f0f0f0" textLength="95.6" lengthAdjust="spacingAndGlyphs" >0.4046</text>
<text x="1523.5" y="1318.2" font-size="22" fill="#f0f0f0" textLength="95.6" lengthAdjust="spacingAndGlyphs" >0.7150</text>
<text x="1674" y="1318.2" font-size="22" fill="#f0f0f0" textLength="95.6" lengthAdjust="spacingAndGlyphs" >0.2891</text>
<text x="1824.5" y="1318.2" font-size="22" fill="#f0f0f0" textLength="95.6" lengthAdjust="spacingAndGlyphs" >0.1620</text>
<text x="1975" y="1318.2" font-size="22" fill="#f0f0f0" textLength="95.6" lengthAdjust="spacingAndGlyphs" >0.4579</text>
<text x="1115" y="1354.2" font-size="23" fill="#f0f0f0" font-weight="bold" textLength="100.5" lengthAdjust="spacingAndGlyphs" >ΔE ITP</text>
<text x="1373" y="1354.2" font-size="22" fill="#f0f0f0" textLength="95.6" lengthAdjust="spacingAndGlyphs" >1.0483</text>
<text x="1523.5" y="1354.2" font-size="22" fill="#f0f0f0" textLength="95.6" lengthAdjust="spacingAndGlyphs" >1.8448</text>
<text x="1674" y="1354.2" font-size="22" fill="#f0f0f0" textLength="95.6" lengthAdjust="spacingAndGlyphs" >1.0936</text>
<text x="1824.5" y="1354.2" font-size="22" fill="#f0f0f0" textLength="95.6" lengthAdjust="spacingAndGlyphs" >0.6609</text>
<text x="1975" y="1354.2" font-size="22" fill="#f0f0f0" textLength="95.6" lengthAdjust="spacingAndGlyphs" >1.2616</text>
<text x="1439" y="1059.3" font-size="20" fill="#ffffff" text-anchor="middle" font-weight="bold" textLength="56" lengthAdjust="spacingAndGlyphs" >20%</text>
<text x="1589" y="1059.3" font-size="20" fill="#ffffff" text-anchor="middle" font-weight="bold" textLength="57" lengthAdjust="spacingAndGlyphs" >40%</text>
<text x="1739.8" y="1059.3" font-size="20" fill="#ffffff" text-anchor="middle" font-weight="bold" textLength="56" lengthAdjust="spacingAndGlyphs" >60%</text>
<text x="1890" y="1059.3" font-size="20" fill="#ffffff" text-anchor="middle" font-weight="bold" textLength="56" lengthAdjust="spacingAndGlyphs" >80%</text>
<text x="2041.5" y="1059.3" font-size="20" fill="#ffffff" text-anchor="middle" font-weight="bold" textLength="71.5" lengthAdjust="spacingAndGlyphs" >100%</text>
<rect x="2116" y="1033" width="2.2" height="331" fill="#000" />
<rect x="1087.5" y="1031" width="1462" height="335" fill="none" stroke="#000" stroke-width="2.5"/>
<rect x="1087.5" y="1031" width="1462" height="335" fill="none" stroke="#fff" stroke-width="2.5" stroke-dasharray="2.3 3.4"/>
<rect x="200" y="1490" width="2360" height="62" fill="url(#strip)" />
<rect x="201" y="1490.5" width="44.7" height="62" rx="3" fill="url(#sbtn)"/>
<circle cx="223.3" cy="1500" r="7" fill="#6a6a6a"/><path d="M218.5 1502.5 H228 L223.3 1497 Z" fill="#111"/>
<rect x="206" y="1516" width="35.5" height="30.7" rx="3" fill="#ffff00" stroke="#8a8a00" stroke-width="0.8"/>
<rect x="252.4" y="1490.5" width="149.5" height="62" rx="3" fill="url(#pbtn)"/>
<rect x="257.6" y="1494.8" width="139.3" height="35.9" rx="3" fill="#c2c2a4" stroke="#8a8a7a" stroke-width="1"/>
<text x="327.2" y="1547" font-size="11.5" fill="#2a2a2a" text-anchor="middle" font-weight="bold" textLength="19.5" lengthAdjust="spacingAndGlyphs" >20%</text>
<rect x="404.4" y="1490.5" width="149.5" height="62" rx="3" fill="url(#pbtn)"/>
<rect x="409.6" y="1494.8" width="139.3" height="35.9" rx="3" fill="#c3c088" stroke="#8a8a7a" stroke-width="1"/>
<text x="479.2" y="1547" font-size="11.5" fill="#2a2a2a" text-anchor="middle" font-weight="bold" textLength="19.5" lengthAdjust="spacingAndGlyphs" >40%</text>
<rect x="556.4" y="1490.5" width="149.5" height="62" rx="3" fill="url(#pbtn)"/>
<rect x="561.6" y="1494.8" width="139.3" height="35.9" rx="3" fill="#c3c070" stroke="#8a8a7a" stroke-width="1"/>
<text x="631.2" y="1547" font-size="11.5" fill="#2a2a2a" text-anchor="middle" font-weight="bold" textLength="19.5" lengthAdjust="spacingAndGlyphs" >60%</text>
<rect x="708.3" y="1490.5" width="149.5" height="62" rx="3" fill="url(#pbtn)"/>
<rect x="713.5" y="1494.8" width="139.3" height="35.9" rx="3" fill="#c4c350" stroke="#8a8a7a" stroke-width="1"/>
<text x="783.1" y="1547" font-size="11.5" fill="#2a2a2a" text-anchor="middle" font-weight="bold" textLength="19.5" lengthAdjust="spacingAndGlyphs" >80%</text>
<rect x="860.3" y="1490.5" width="149.5" height="62" rx="3" fill="url(#pbtnsel)"/>
<rect x="865.5" y="1494.8" width="139.3" height="35.9" rx="3" fill="#c4c300" stroke="#111" stroke-width="1"/>
<text x="935.1" y="1547" font-size="11.5" fill="#ffffff" text-anchor="middle" font-weight="bold" textLength="26" lengthAdjust="spacingAndGlyphs" >100%</text>
<rect x="2285" y="1490" width="275" height="30" fill="url(#tbrow)" />
<line x1="2332" y1="1490" x2="2332" y2="1520" stroke="#2a2a2a" stroke-width="1.2" />
<line x1="2377.4" y1="1490" x2="2377.4" y2="1520" stroke="#2a2a2a" stroke-width="1.2" />
<line x1="2422" y1="1490" x2="2422" y2="1520" stroke="#2a2a2a" stroke-width="1.2" />
<line x1="2467" y1="1490" x2="2467" y2="1520" stroke="#2a2a2a" stroke-width="1.2" />
<line x1="2512.4" y1="1490" x2="2512.4" y2="1520" stroke="#2a2a2a" stroke-width="1.2" />
<circle cx="2308.5" cy="1509" r="7.5" fill="#6a6a6a" opacity="0.6"/>
<circle cx="2354.7" cy="1509" r="7.5" fill="#6a6a6a" opacity="0.6"/>
<circle cx="2399.7" cy="1509" r="7.5" fill="#6a6a6a" opacity="0.6"/>
<circle cx="2444.5" cy="1509" r="7.5" fill="#6a6a6a" opacity="0.6"/>
<circle cx="2489.7" cy="1509" r="7.5" fill="#6a6a6a" opacity="0.6"/>
<circle cx="2536" cy="1509" r="7.5" fill="#6a6a6a" opacity="0.6"/>
<rect x="2237" y="1509.5" width="48" height="43" rx="3" fill="url(#sbtn)"/>
<rect x="2248.5" y="1516" width="26" height="26" rx="3" fill="#a0a0a0" stroke="#1e1e1e" stroke-width="2.5"/><rect x="2254" y="1522" width="14" height="13" fill="#000"/>
<rect x="2286.2" y="1521" width="135.8" height="31" rx="2" fill="url(#bk)"/>
<rect x="2422" y="1521" width="138" height="31" rx="2" fill="url(#bk)"/>
<line x1="2422" y1="1521" x2="2422" y2="1552" stroke="#6a6a6a" stroke-width="1.2" />
<circle cx="2317" cy="1537" r="9" fill="#9a9a9a"/><circle cx="2531" cy="1537" r="9" fill="#9a9a9a"/>
<text x="2317" y="1542.5" font-size="17" fill="#2a2a2a" text-anchor="middle" >«</text>
<text x="2531" y="1542.5" font-size="17" fill="#2a2a2a" text-anchor="middle" >»</text>
<text x="2343.7" y="1543.5" font-size="21" fill="#2a2a2a" textLength="50.3" lengthAdjust="spacingAndGlyphs" >Back</text>
<text x="2450" y="1543.5" font-size="21" fill="#2a2a2a" textLength="52" lengthAdjust="spacingAndGlyphs" >Next</text>
<g fill="none" stroke-linecap="round" stroke-linejoin="round" opacity="0.9"><path d="M2174.5 1470 L2226 1481 L2228 1511 M2174.5 1470 L2177 1519.5 L2208.5 1535.5 L2263 1517.5" stroke="#d8d8d8" stroke-width="6.5"/><path d="M2228 1511 L2188 1514 M2263 1517.5 L2232 1512" stroke="#d8d8d8" stroke-width="4"/><path d="M2174.5 1470 L2226 1481 L2228 1511 M2174.5 1470 L2177 1519.5 L2208.5 1535.5 L2263 1517.5" stroke="#8a2830" stroke-width="4.2"/><path d="M2228 1511 L2188 1514 M2263 1517.5 L2232 1512" stroke="#8a2830" stroke-width="1.8"/><path d="M2189 1487 L2197 1483.5 L2207 1494.5 L2232 1469 L2233.5 1471.5 L2205 1507 Z" fill="#2c2c2c" stroke="#d0d0d0" stroke-width="1.2"/></g>
<text x="2233.3" y="1508.2" font-size="35.6" font-weight="bold" textLength="197.6" lengthAdjust="spacingAndGlyphs" fill="none" stroke="#d8d8d8" stroke-opacity="0.8" stroke-width="4.4" stroke-linejoin="round">NOTEBOOK</text>
<text x="2233.3" y="1508.2" font-size="35.6" font-weight="bold" textLength="197.6" lengthAdjust="spacingAndGlyphs" fill="#a02838" stroke="#a02838" stroke-width="2" stroke-linejoin="round" opacity="0.72">NOTEBOOK</text>
<text x="2432.9" y="1508.2" font-size="35.6" font-weight="bold" textLength="117.1" lengthAdjust="spacingAndGlyphs" fill="none" stroke="#d8d8d8" stroke-opacity="0.8" stroke-width="4.4" stroke-linejoin="round">CHECK</text>
<text x="2432.9" y="1508.2" font-size="35.6" font-weight="bold" textLength="117.1" lengthAdjust="spacingAndGlyphs" fill="#2e2e2e" stroke="#2e2e2e" stroke-width="2" stroke-linejoin="round" opacity="0.72">CHECK</text>
<rect x="1577" y="231" width="983" height="790" fill="#1c1c1c" />
<rect x="1587" y="241" width="962" height="770" fill="#333333" />
<rect x="2558" y="87.5" width="2" height="1465" fill="#111111" />
<text x="2068" y="266.7" font-size="20.8" fill="#d8d8d8" text-anchor="middle" textLength="117.8" lengthAdjust="spacingAndGlyphs" >CIE 1976 u'v'</text>
<rect x="1640" y="274.5" width="905" height="695.4" fill="#222222" /></svg>
<div style="position:absolute;left:1640px;top:274px;width:905px;height:696px;overflow:hidden;clip-path:polygon(385.5px 675.3px,385.4px 675.3px,385.4px 675.3px,385.4px 675.3px,385.4px 675.3px,385.4px 675.3px,385.3px 675.3px,385.3px 675.3px,385.3px 675.3px,385.2px 675.3px,385.2px 675.3px,385.2px 675.3px,385.2px 675.4px,385.1px 675.4px,385.1px 675.4px,385.1px 675.5px,385.0px 675.5px,385.0px 675.6px,385.0px 675.6px,384.9px 675.7px,384.9px 675.7px,384.8px 675.7px,384.8px 675.7px,384.7px 675.7px,384.7px 675.7px,384.6px 675.7px,384.6px 675.7px,384.5px 675.7px,384.5px 675.7px,384.4px 675.7px,384.4px 675.7px,384.3px 675.7px,384.3px 675.7px,384.2px 675.8px,384.2px 675.8px,384.1px 675.9px,384.1px 675.9px,384.0px 676.0px,383.9px 676.0px,383.9px 676.0px,383.8px 676.1px,383.7px 676.1px,383.7px 676.1px,383.6px 676.1px,383.5px 676.1px,383.5px 676.1px,383.4px 676.1px,383.3px 676.1px,383.2px 676.1px,383.1px 676.1px,383.1px 676.1px,383.0px 676.1px,382.9px 676.1px,382.8px 676.1px,382.7px 676.1px,382.6px 676.1px,382.5px 676.1px,382.4px 676.1px,382.3px 676.1px,382.2px 676.1px,382.1px 676.1px,381.9px 676.1px,381.8px 676.1px,381.7px 676.1px,381.6px 676.1px,381.5px 676.1px,381.4px 676.2px,381.3px 676.2px,381.1px 676.1px,381.0px 676.1px,380.8px 676.1px,380.6px 676.0px,380.5px 676.0px,380.3px 675.9px,380.1px 675.8px,379.9px 675.7px,379.6px 675.6px,379.4px 675.4px,379.1px 675.3px,378.9px 675.1px,378.6px 675.0px,378.2px 674.8px,377.9px 674.6px,377.6px 674.3px,377.2px 674.1px,376.8px 673.8px,376.4px 673.6px,376.0px 673.3px,375.6px 673.0px,375.1px 672.7px,374.7px 672.4px,374.2px 672.0px,373.7px 671.7px,373.3px 671.3px,372.8px 671.0px,372.3px 670.6px,371.8px 670.2px,371.2px 669.7px,370.6px 669.3px,370.1px 668.8px,369.4px 668.3px,368.8px 667.8px,368.1px 667.3px,367.4px 666.7px,366.7px 666.1px,365.9px 665.5px,365.1px 664.9px,364.3px 664.2px,363.5px 663.6px,362.7px 662.9px,361.8px 662.2px,361.0px 661.4px,360.1px 660.7px,359.2px 659.9px,358.3px 659.1px,357.3px 658.3px,356.4px 657.5px,355.4px 656.6px,354.4px 655.8px,353.3px 654.9px,352.3px 654.0px,351.2px 653.1px,350.1px 652.2px,348.9px 651.2px,347.8px 650.3px,346.6px 649.3px,345.4px 648.3px,344.2px 647.3px,342.9px 646.2px,341.5px 645.1px,340.2px 644.0px,338.8px 642.8px,337.3px 641.6px,335.8px 640.4px,334.3px 639.1px,332.7px 637.8px,331.1px 636.5px,329.4px 635.2px,327.7px 633.8px,326.0px 632.4px,324.3px 630.9px,322.5px 629.5px,320.8px 628.0px,319.0px 626.5px,317.1px 625.0px,315.2px 623.4px,313.3px 621.8px,311.4px 620.2px,309.4px 618.5px,307.3px 616.7px,305.2px 614.9px,303.1px 613.0px,300.9px 611.1px,298.6px 609.2px,296.4px 607.2px,294.1px 605.1px,291.7px 603.0px,289.3px 600.8px,286.8px 598.5px,284.3px 596.2px,281.8px 593.7px,279.2px 591.2px,276.6px 588.7px,274.0px 586.2px,271.3px 583.5px,268.6px 580.8px,265.8px 578.0px,262.9px 575.0px,259.9px 571.9px,256.8px 568.6px,253.6px 565.0px,250.3px 561.2px,246.8px 557.3px,243.3px 553.2px,239.7px 548.9px,235.9px 544.5px,232.1px 539.9px,228.3px 535.1px,224.3px 530.2px,220.3px 525.1px,216.3px 519.8px,212.1px 514.4px,207.9px 508.8px,203.6px 503.0px,199.3px 497.0px,194.9px 490.9px,190.4px 484.6px,185.9px 478.2px,181.3px 471.6px,176.7px 464.9px,172.2px 458.0px,167.5px 451.0px,162.8px 443.7px,158.0px 436.3px,153.2px 428.7px,148.4px 420.9px,143.5px 413.1px,138.6px 405.2px,133.8px 397.2px,129.0px 389.2px,124.3px 381.2px,119.6px 373.1px,114.8px 364.9px,110.0px 356.6px,105.3px 348.2px,100.5px 339.8px,95.9px 331.3px,91.3px 322.9px,86.8px 314.5px,82.4px 306.2px,78.3px 298.0px,74.2px 289.8px,70.2px 281.6px,66.4px 273.4px,62.6px 265.2px,58.9px 257.1px,55.3px 249.1px,51.9px 241.1px,48.6px 233.3px,45.4px 225.6px,42.3px 218.2px,39.3px 210.9px,36.5px 203.6px,33.7px 196.5px,31.1px 189.5px,28.6px 182.7px,26.2px 176.0px,23.9px 169.4px,21.8px 163.0px,19.8px 156.9px,17.8px 150.9px,16.1px 145.1px,14.4px 139.5px,12.9px 134.1px,11.5px 128.9px,10.2px 123.9px,9.0px 119.0px,7.9px 114.2px,6.9px 109.6px,6.0px 105.2px,5.2px 100.9px,4.5px 96.7px,3.9px 92.8px,3.3px 89.0px,2.9px 85.3px,2.6px 81.8px,2.4px 78.5px,2.2px 75.2px,2.1px 72.1px,2.1px 69.0px,2.2px 66.1px,2.3px 63.2px,2.5px 60.4px,2.8px 57.8px,3.2px 55.3px,3.7px 52.9px,4.2px 50.6px,4.8px 48.3px,5.5px 46.2px,6.2px 44.1px,7.0px 42.1px,7.8px 40.2px,8.8px 38.4px,9.8px 36.7px,10.8px 35.1px,12.0px 33.5px,13.2px 32.1px,14.4px 30.7px,15.7px 29.4px,17.1px 28.1px,18.4px 26.9px,19.9px 25.8px,21.3px 24.8px,22.9px 23.9px,24.4px 23.1px,26.1px 22.3px,27.7px 21.6px,29.4px 20.9px,31.2px 20.3px,32.9px 19.7px,34.7px 19.2px,36.5px 18.7px,38.3px 18.3px,40.2px 17.9px,42.1px 17.6px,44.1px 17.3px,46.0px 17.1px,48.0px 16.9px,50.0px 16.7px,52.0px 16.5px,54.0px 16.3px,56.1px 16.2px,58.1px 16.0px,60.2px 15.9px,62.3px 15.8px,64.5px 15.8px,66.6px 15.7px,68.7px 15.7px,70.9px 15.7px,73.0px 15.6px,75.1px 15.6px,77.3px 15.6px,79.4px 15.6px,81.5px 15.6px,83.6px 15.6px,85.8px 15.6px,87.9px 15.7px,90.1px 15.7px,92.2px 15.8px,94.4px 15.8px,96.6px 15.9px,98.8px 16.0px,101.0px 16.0px,103.1px 16.1px,105.4px 16.2px,107.6px 16.3px,109.8px 16.4px,112.1px 16.6px,114.3px 16.7px,116.6px 16.8px,118.9px 16.9px,121.2px 17.1px,123.6px 17.2px,125.9px 17.4px,128.3px 17.6px,130.7px 17.7px,133.1px 17.9px,135.6px 18.1px,138.0px 18.3px,140.5px 18.5px,143.0px 18.7px,145.5px 18.9px,148.1px 19.1px,150.6px 19.3px,153.2px 19.6px,155.8px 19.8px,158.4px 20.0px,161.1px 20.3px,163.7px 20.5px,166.4px 20.8px,169.2px 21.0px,171.9px 21.3px,174.7px 21.6px,177.5px 21.9px,180.3px 22.1px,183.2px 22.4px,186.1px 22.7px,189.0px 23.0px,191.9px 23.3px,194.9px 23.6px,197.9px 24.0px,201.0px 24.3px,204.0px 24.6px,207.1px 24.9px,210.3px 25.3px,213.5px 25.6px,216.7px 26.0px,219.9px 26.3px,223.2px 26.7px,226.5px 27.0px,229.8px 27.4px,233.2px 27.8px,236.6px 28.1px,240.0px 28.5px,243.5px 28.9px,247.0px 29.3px,250.5px 29.7px,254.1px 30.1px,257.7px 30.5px,261.4px 30.9px,265.1px 31.3px,268.8px 31.7px,272.6px 32.2px,276.4px 32.6px,280.2px 33.0px,284.1px 33.5px,288.0px 33.9px,292.0px 34.4px,296.0px 34.8px,300.0px 35.3px,304.1px 35.7px,308.2px 36.2px,312.4px 36.7px,316.6px 37.2px,320.8px 37.7px,325.1px 38.1px,329.4px 38.6px,333.7px 39.1px,338.1px 39.6px,342.5px 40.2px,347.0px 40.7px,351.5px 41.2px,356.0px 41.7px,360.6px 42.2px,365.2px 42.8px,369.9px 43.3px,374.6px 43.9px,379.3px 44.4px,384.1px 45.0px,388.9px 45.5px,393.8px 46.1px,398.7px 46.6px,403.6px 47.2px,408.6px 47.8px,413.6px 48.4px,418.6px 48.9px,423.7px 49.5px,428.8px 50.1px,433.9px 50.7px,439.1px 51.3px,444.2px 51.9px,449.4px 52.5px,454.7px 53.1px,460.0px 53.7px,465.3px 54.3px,470.7px 54.9px,476.0px 55.5px,481.4px 56.2px,486.8px 56.8px,492.2px 57.4px,497.6px 58.0px,503.1px 58.6px,508.5px 59.3px,514.0px 59.9px,519.5px 60.6px,525.1px 61.2px,530.6px 61.8px,536.1px 62.5px,541.6px 63.1px,547.0px 63.7px,552.5px 64.4px,557.8px 65.0px,563.2px 65.6px,568.6px 66.2px,573.9px 66.8px,579.2px 67.5px,584.5px 68.1px,589.8px 68.7px,595.1px 69.3px,600.4px 69.9px,605.6px 70.5px,610.9px 71.1px,616.1px 71.7px,621.4px 72.3px,626.6px 72.9px,631.9px 73.5px,637.1px 74.1px,642.2px 74.7px,647.3px 75.3px,652.4px 75.9px,657.4px 76.4px,662.3px 77.0px,667.1px 77.6px,671.9px 78.1px,676.7px 78.7px,681.4px 79.2px,686.1px 79.7px,690.7px 80.3px,695.3px 80.8px,699.8px 81.3px,704.2px 81.8px,708.6px 82.3px,713.0px 82.8px,717.2px 83.3px,721.5px 83.8px,725.7px 84.3px,729.8px 84.8px,733.8px 85.2px,737.8px 85.7px,741.8px 86.1px,745.6px 86.6px,749.4px 87.0px,753.2px 87.5px,756.9px 87.9px,760.5px 88.3px,764.0px 88.7px,767.5px 89.1px,770.9px 89.5px,774.3px 89.9px,777.6px 90.3px,780.9px 90.7px,784.1px 91.0px,787.3px 91.4px,790.3px 91.7px,793.3px 92.1px,796.3px 92.4px,799.2px 92.8px,802.1px 93.1px,804.9px 93.4px,807.7px 93.7px,810.4px 94.0px,813.1px 94.4px,815.7px 94.7px,818.3px 95.0px,820.9px 95.2px,823.4px 95.5px,825.8px 95.8px,828.2px 96.1px,830.6px 96.4px,833.0px 96.7px,835.3px 96.9px,837.6px 97.2px,839.9px 97.5px,842.1px 97.7px,844.3px 98.0px,846.5px 98.2px,848.7px 98.5px,850.8px 98.7px,852.8px 98.9px,854.9px 99.2px,856.9px 99.4px,858.9px 99.6px,860.8px 99.9px,862.7px 100.1px,864.6px 100.3px,866.4px 100.5px,868.3px 100.7px,870.0px 100.9px,871.8px 101.1px,873.5px 101.3px,875.1px 101.5px,876.8px 101.7px,878.4px 101.9px,879.9px 102.1px,881.4px 102.2px,882.9px 102.4px,884.4px 102.6px,885.8px 102.7px,887.2px 102.9px,888.6px 103.0px,889.9px 103.2px,891.2px 103.3px,892.4px 103.5px,893.7px 103.6px,894.8px 103.8px,896.0px 103.9px,897.1px 104.0px,898.2px 104.2px,899.3px 104.3px,900.3px 104.4px,901.3px 104.5px,902.3px 104.6px,903.3px 104.7px,904.3px 104.9px,905.2px 105.0px,906.1px 105.1px,907.0px 105.2px,907.8px 105.3px,908.7px 105.4px,909.5px 105.5px,910.3px 105.5px,911.0px 105.6px,911.8px 105.7px,912.5px 105.8px,913.2px 105.9px,913.9px 106.0px,914.5px 106.0px,915.2px 106.1px,915.8px 106.2px,916.4px 106.3px,916.9px 106.3px,917.5px 106.4px,918.0px 106.4px,918.4px 106.5px,918.9px 106.5px,919.3px 106.6px,919.7px 106.6px,920.1px 106.7px,920.5px 106.7px,920.9px 106.8px,921.3px 106.8px,921.7px 106.9px,922.1px 106.9px,922.4px 107.0px,922.8px 107.0px,923.2px 107.0px,923.5px 107.1px,923.9px 107.1px,924.2px 107.2px,924.5px 107.2px,924.9px 107.2px,925.2px 107.3px,925.5px 107.3px,925.8px 107.3px,926.0px 107.4px,926.3px 107.4px,926.6px 107.4px,926.8px 107.5px,927.1px 107.5px,927.4px 107.5px,927.7px 107.6px,927.9px 107.6px,928.2px 107.6px,928.5px 107.7px,928.7px 107.7px,929.0px 107.7px,929.3px 107.7px,929.5px 107.8px,929.8px 107.8px,930.1px 107.8px,930.5px 107.9px,930.8px 107.9px,931.2px 108.0px,931.7px 108.0px,932.1px 108.1px,932.6px 108.1px,933.0px 108.2px,933.5px 108.2px,933.9px 108.3px,934.2px 108.3px,934.5px 108.3px,934.7px 108.4px,934.9px 108.4px,935.1px 108.4px,935.2px 108.4px,935.4px 108.4px,935.5px 108.5px,935.5px 108.5px,935.6px 108.5px,935.7px 108.5px,935.7px 108.5px);background:linear-gradient(to bottom,#009a00 0px,#009a00 60px,#009a5a 125px,#009a9a 170px,#00689a 250px,#0028a0 400px,#0000a0 560px)"><div style="position:absolute;left:0;top:0;width:905px;height:696px;clip-path:polygon(0px 0px,905px 0px,905px 110.9px,676.5px 89.5px,187.6px 43.7px,0px 26.1px);background:linear-gradient(to right,#009a00 187px,#9a9a00 306px,#9a4000 480px,#9a0000 677px)"></div><div style="position:absolute;left:0;top:0;width:905px;height:696px;clip-path:polygon(676.5px 89.5px,905px 110.9px,905px 696px,83.1px 696px,263.3px 511.8px);background:linear-gradient(44.4deg,#0000a0 30%,#50009a 50%,#9a009a 62%,#9a0040 78%,#9a0000 90%)"></div><div style="position:absolute;left:0;top:0;width:905px;height:696px;clip-path:polygon(187.6px 43.7px,676.5px 89.5px,263.3px 511.8px);background:radial-gradient(circle at 297px 152.6px,#ffffff 0px,rgba(255,255,255,0.85) 40px,rgba(255,255,255,0) 220px),conic-gradient(from 0deg at 297px 152.6px,#e5ff00 0deg,#ffff00 5.3deg,#ff0000 80.6deg,#ff00ff 134.9deg,#0000ff 185.4deg,#00ffff 260.5deg,#00ff00 314.9deg,#e5ff00 360deg)"></div></div>
<canvas id="cie" width="905" height="696" style="left:1640px;top:274px;"></canvas>
<svg width="2560" height="1552" viewBox="0 0 2560 1552" style="pointer-events:none"><line x1="1631" y1="969.9" x2="1640" y2="969.9" stroke="#e0e0e0" stroke-width="2" />
<text x="1630.7" y="976.9" font-size="20.3" fill="#d8d8d8" text-anchor="end" textLength="10.5" lengthAdjust="spacingAndGlyphs" >0</text>
<line x1="1631" y1="912.07" x2="1640" y2="912.07" stroke="#e0e0e0" stroke-width="2" />
<text x="1630.7" y="919.07" font-size="20.3" fill="#d8d8d8" text-anchor="end" textLength="39.8" lengthAdjust="spacingAndGlyphs" >0.05</text>
<line x1="1631" y1="854.24" x2="1640" y2="854.24" stroke="#e0e0e0" stroke-width="2" />
<text x="1630.7" y="861.24" font-size="20.3" fill="#d8d8d8" text-anchor="end" textLength="28.5" lengthAdjust="spacingAndGlyphs" >0.1</text>
<line x1="1631" y1="796.41" x2="1640" y2="796.41" stroke="#e0e0e0" stroke-width="2" />
<text x="1630.7" y="803.41" font-size="20.3" fill="#d8d8d8" text-anchor="end" textLength="39.8" lengthAdjust="spacingAndGlyphs" >0.15</text>
<line x1="1631" y1="738.58" x2="1640" y2="738.58" stroke="#e0e0e0" stroke-width="2" />
<text x="1630.7" y="745.58" font-size="20.3" fill="#d8d8d8" text-anchor="end" textLength="28.5" lengthAdjust="spacingAndGlyphs" >0.2</text>
<line x1="1631" y1="680.75" x2="1640" y2="680.75" stroke="#e0e0e0" stroke-width="2" />
<text x="1630.7" y="687.75" font-size="20.3" fill="#d8d8d8" text-anchor="end" textLength="39.8" lengthAdjust="spacingAndGlyphs" >0.25</text>
<line x1="1631" y1="622.92" x2="1640" y2="622.92" stroke="#e0e0e0" stroke-width="2" />
<text x="1630.7" y="629.92" font-size="20.3" fill="#d8d8d8" text-anchor="end" textLength="28.5" lengthAdjust="spacingAndGlyphs" >0.3</text>
<line x1="1631" y1="565.09" x2="1640" y2="565.09" stroke="#e0e0e0" stroke-width="2" />
<text x="1630.7" y="572.09" font-size="20.3" fill="#d8d8d8" text-anchor="end" textLength="39.8" lengthAdjust="spacingAndGlyphs" >0.35</text>
<line x1="1631" y1="507.26" x2="1640" y2="507.26" stroke="#e0e0e0" stroke-width="2" />
<text x="1630.7" y="514.26" font-size="20.3" fill="#d8d8d8" text-anchor="end" textLength="28.5" lengthAdjust="spacingAndGlyphs" >0.4</text>
<line x1="1631" y1="449.43" x2="1640" y2="449.43" stroke="#e0e0e0" stroke-width="2" />
<text x="1630.7" y="456.43" font-size="20.3" fill="#d8d8d8" text-anchor="end" textLength="39.8" lengthAdjust="spacingAndGlyphs" >0.45</text>
<line x1="1631" y1="391.6" x2="1640" y2="391.6" stroke="#e0e0e0" stroke-width="2" />
<text x="1630.7" y="398.6" font-size="20.3" fill="#d8d8d8" text-anchor="end" textLength="28.5" lengthAdjust="spacingAndGlyphs" >0.5</text>
<line x1="1631" y1="333.77" x2="1640" y2="333.77" stroke="#e0e0e0" stroke-width="2" />
<text x="1630.7" y="340.77" font-size="20.3" fill="#d8d8d8" text-anchor="end" textLength="39.8" lengthAdjust="spacingAndGlyphs" >0.55</text>
<line x1="1640" y1="970" x2="1640" y2="978.5" stroke="#e0e0e0" stroke-width="2" />
<text x="1640" y="1001" font-size="20.3" fill="#d8d8d8" text-anchor="middle" textLength="10.5" lengthAdjust="spacingAndGlyphs" >0</text>
<line x1="1715.29" y1="970" x2="1715.29" y2="978.5" stroke="#e0e0e0" stroke-width="2" />
<text x="1715.29" y="1001" font-size="20.3" fill="#d8d8d8" text-anchor="middle" textLength="39.8" lengthAdjust="spacingAndGlyphs" >0.05</text>
<line x1="1790.58" y1="970" x2="1790.58" y2="978.5" stroke="#e0e0e0" stroke-width="2" />
<text x="1790.58" y="1001" font-size="20.3" fill="#d8d8d8" text-anchor="middle" textLength="28.5" lengthAdjust="spacingAndGlyphs" >0.1</text>
<line x1="1865.87" y1="970" x2="1865.87" y2="978.5" stroke="#e0e0e0" stroke-width="2" />
<text x="1865.87" y="1001" font-size="20.3" fill="#d8d8d8" text-anchor="middle" textLength="39.8" lengthAdjust="spacingAndGlyphs" >0.15</text>
<line x1="1941.16" y1="970" x2="1941.16" y2="978.5" stroke="#e0e0e0" stroke-width="2" />
<text x="1941.16" y="1001" font-size="20.3" fill="#d8d8d8" text-anchor="middle" textLength="28.5" lengthAdjust="spacingAndGlyphs" >0.2</text>
<line x1="2016.45" y1="970" x2="2016.45" y2="978.5" stroke="#e0e0e0" stroke-width="2" />
<text x="2016.45" y="1001" font-size="20.3" fill="#d8d8d8" text-anchor="middle" textLength="39.8" lengthAdjust="spacingAndGlyphs" >0.25</text>
<line x1="2091.74" y1="970" x2="2091.74" y2="978.5" stroke="#e0e0e0" stroke-width="2" />
<text x="2091.74" y="1001" font-size="20.3" fill="#d8d8d8" text-anchor="middle" textLength="28.5" lengthAdjust="spacingAndGlyphs" >0.3</text>
<line x1="2167.03" y1="970" x2="2167.03" y2="978.5" stroke="#e0e0e0" stroke-width="2" />
<text x="2167.03" y="1001" font-size="20.3" fill="#d8d8d8" text-anchor="middle" textLength="39.8" lengthAdjust="spacingAndGlyphs" >0.35</text>
<line x1="2242.32" y1="970" x2="2242.32" y2="978.5" stroke="#e0e0e0" stroke-width="2" />
<text x="2242.32" y="1001" font-size="20.3" fill="#d8d8d8" text-anchor="middle" textLength="28.5" lengthAdjust="spacingAndGlyphs" >0.4</text>
<line x1="2317.61" y1="970" x2="2317.61" y2="978.5" stroke="#e0e0e0" stroke-width="2" />
<text x="2317.61" y="1001" font-size="20.3" fill="#d8d8d8" text-anchor="middle" textLength="39.8" lengthAdjust="spacingAndGlyphs" >0.45</text>
<line x1="2392.9" y1="970" x2="2392.9" y2="978.5" stroke="#e0e0e0" stroke-width="2" />
<text x="2392.9" y="1001" font-size="20.3" fill="#d8d8d8" text-anchor="middle" textLength="28.5" lengthAdjust="spacingAndGlyphs" >0.5</text>
<line x1="2468.19" y1="970" x2="2468.19" y2="978.5" stroke="#e0e0e0" stroke-width="2" />
<text x="2468.19" y="1001" font-size="20.3" fill="#d8d8d8" text-anchor="middle" textLength="39.8" lengthAdjust="spacingAndGlyphs" >0.55</text>
<line x1="1640" y1="274.5" x2="2544.5" y2="274.5" stroke="#9a9a9a" stroke-width="2.2" />
<line x1="2544.5" y1="273.5" x2="2544.5" y2="971" stroke="#9a9a9a" stroke-width="2.2" />
<line x1="1631" y1="969.9" x2="2545.5" y2="969.9" stroke="#9a9a9a" stroke-width="2.2" />
<line x1="1640" y1="273.5" x2="1640" y2="978.5" stroke="#9a9a9a" stroke-width="2.2" />
<rect x="1818.4" y="307.3" width="18.4" height="18.4" fill="none" stroke="#ffffff" stroke-width="2.2"/>
<rect x="1835.7" y="324" width="18.4" height="18.4" fill="none" stroke="#ffffff" stroke-width="2.2"/>
<rect x="1852.7" y="341.6" width="18.4" height="18.4" fill="none" stroke="#ffffff" stroke-width="2.2"/>
<rect x="1873.8" y="362.7" width="18.4" height="18.4" fill="none" stroke="#ffffff" stroke-width="2.2"/>
<rect x="1898.8" y="386.1" width="18.4" height="18.4" fill="none" stroke="#ffffff" stroke-width="2.2"/>
<rect x="1937.4" y="318.2" width="18.4" height="18.4" fill="none" stroke="#ffffff" stroke-width="2.2"/>
<rect x="1935.4" y="334.7" width="18.4" height="18.4" fill="none" stroke="#ffffff" stroke-width="2.2"/>
<rect x="1934.9" y="351.3" width="18.4" height="18.4" fill="none" stroke="#ffffff" stroke-width="2.2"/>
<rect x="1933.6" y="369.8" width="18.4" height="18.4" fill="none" stroke="#ffffff" stroke-width="2.2"/>
<rect x="1931.1" y="391.4" width="18.4" height="18.4" fill="none" stroke="#ffffff" stroke-width="2.2"/>
<rect x="1839" y="431.9" width="18.4" height="18.4" fill="none" stroke="#ffffff" stroke-width="2.2"/>
<rect x="1856.8" y="428.3" width="18.4" height="18.4" fill="none" stroke="#ffffff" stroke-width="2.2"/>
<rect x="1873.8" y="425.8" width="18.4" height="18.4" fill="none" stroke="#ffffff" stroke-width="2.2"/>
<rect x="1892.9" y="421.7" width="18.4" height="18.4" fill="none" stroke="#ffffff" stroke-width="2.2"/>
<rect x="1910.7" y="419.9" width="18.4" height="18.4" fill="none" stroke="#ffffff" stroke-width="2.2"/>
<rect x="1895.3" y="776.8" width="18.4" height="18.4" fill="none" stroke="#ffffff" stroke-width="2.2"/>
<rect x="1906.3" y="655.3" width="18.4" height="18.4" fill="none" stroke="#ffffff" stroke-width="2.2"/>
<rect x="1914.5" y="574.3" width="18.4" height="18.4" fill="none" stroke="#ffffff" stroke-width="2.2"/>
<rect x="1920.1" y="511" width="18.4" height="18.4" fill="none" stroke="#ffffff" stroke-width="2.2"/>
<rect x="1923.4" y="459.3" width="18.4" height="18.4" fill="none" stroke="#ffffff" stroke-width="2.2"/>
<rect x="2088.8" y="576.3" width="18.4" height="18.4" fill="none" stroke="#ffffff" stroke-width="2.2"/>
<rect x="2043" y="531.8" width="18.4" height="18.4" fill="none" stroke="#ffffff" stroke-width="2.2"/>
<rect x="2006.1" y="494.9" width="18.4" height="18.4" fill="none" stroke="#ffffff" stroke-width="2.2"/>
<rect x="1979.4" y="466.5" width="18.4" height="18.4" fill="none" stroke="#ffffff" stroke-width="2.2"/>
<rect x="1952.2" y="439.5" width="18.4" height="18.4" fill="none" stroke="#ffffff" stroke-width="2.2"/>
<rect x="2309" y="353.3" width="18.4" height="18.4" fill="none" stroke="#ffffff" stroke-width="2.2"/>
<rect x="2218.4" y="368.2" width="18.4" height="18.4" fill="none" stroke="#ffffff" stroke-width="2.2"/>
<rect x="2141.3" y="382.2" width="18.4" height="18.4" fill="none" stroke="#ffffff" stroke-width="2.2"/>
<rect x="2072.2" y="392" width="18.4" height="18.4" fill="none" stroke="#ffffff" stroke-width="2.2"/>
<rect x="1997.2" y="405.2" width="18.4" height="18.4" fill="none" stroke="#ffffff" stroke-width="2.2"/>
<circle cx="1828.9" cy="316.5" r="6.3" fill="#00b400" stroke="#000" stroke-width="1.8"/>
<circle cx="1846.4" cy="332.2" r="6.3" fill="#50b850" stroke="#000" stroke-width="1.8"/>
<circle cx="1861.9" cy="350.8" r="6.3" fill="#64b464" stroke="#000" stroke-width="1.8"/>
<circle cx="1883" cy="370.1" r="6.3" fill="#7cbc7c" stroke="#000" stroke-width="1.8"/>
<circle cx="1908" cy="393.5" r="6.3" fill="#9cb894" stroke="#000" stroke-width="1.8"/>
<circle cx="1948.4" cy="327.9" r="6.3" fill="#c0bc00" stroke="#000" stroke-width="1.8"/>
<circle cx="1946.4" cy="342.9" r="6.3" fill="#bcb84c" stroke="#000" stroke-width="1.8"/>
<circle cx="1944.6" cy="358.7" r="6.3" fill="#bab66a" stroke="#000" stroke-width="1.8"/>
<circle cx="1944.3" cy="378.3" r="6.3" fill="#bab884" stroke="#000" stroke-width="1.8"/>
<circle cx="1940.8" cy="400.6" r="6.3" fill="#b8b69a" stroke="#000" stroke-width="1.8"/>
<circle cx="1848.2" cy="439.5" r="6.3" fill="#00b8c0" stroke="#000" stroke-width="1.8"/>
<circle cx="1867" cy="437.3" r="6.3" fill="#50b4b8" stroke="#000" stroke-width="1.8"/>
<circle cx="1883" cy="433.7" r="6.3" fill="#70b0b0" stroke="#000" stroke-width="1.8"/>
<circle cx="1900.3" cy="429.9" r="6.3" fill="#8cb0b0" stroke="#000" stroke-width="1.8"/>
<circle cx="1919.4" cy="427.9" r="6.3" fill="#a2b0b0" stroke="#000" stroke-width="1.8"/>
<circle cx="1902.2" cy="786" r="6.3" fill="#0000b8" stroke="#000" stroke-width="1.8"/>
<circle cx="1915.6" cy="664.4" r="6.3" fill="#4848c0" stroke="#000" stroke-width="1.8"/>
<circle cx="1923.7" cy="583.5" r="6.3" fill="#6464b8" stroke="#000" stroke-width="1.8"/>
<circle cx="1929.3" cy="522" r="6.3" fill="#7c7cb8" stroke="#000" stroke-width="1.8"/>
<circle cx="1934.7" cy="468.5" r="6.3" fill="#9898b0" stroke="#000" stroke-width="1.8"/>
<circle cx="2100" cy="585.7" r="6.3" fill="#b800b8" stroke="#000" stroke-width="1.8"/>
<circle cx="2054" cy="539.8" r="6.3" fill="#bc48bc" stroke="#000" stroke-width="1.8"/>
<circle cx="2017.1" cy="502.9" r="6.3" fill="#bc64bc" stroke="#000" stroke-width="1.8"/>
<circle cx="1992.4" cy="475.7" r="6.3" fill="#b880b8" stroke="#000" stroke-width="1.8"/>
<circle cx="1961.9" cy="448.7" r="6.3" fill="#b89cb0" stroke="#000" stroke-width="1.8"/>
<circle cx="2322" cy="360.5" r="6.3" fill="#b80000" stroke="#000" stroke-width="1.8"/>
<circle cx="2227.6" cy="378.1" r="6.3" fill="#c03838" stroke="#000" stroke-width="1.8"/>
<circle cx="2154.5" cy="389.6" r="6.3" fill="#c05050" stroke="#000" stroke-width="1.8"/>
<circle cx="2082.7" cy="401.2" r="6.3" fill="#bc7070" stroke="#000" stroke-width="1.8"/>
<circle cx="2007.7" cy="414.4" r="6.3" fill="#b88888" stroke="#000" stroke-width="1.8"/>
<rect x="1927.3" y="416.6" width="18.4" height="18.4" fill="none" stroke="#000000" stroke-width="2.2"/>
<circle cx="1938.2" cy="424" r="6.3" fill="#ffffff" stroke="#000" stroke-width="1.8"/>
<rect x="2232" y="751" width="308" height="212" fill="#333333" />
<rect x="2236.5" y="755.5" width="299" height="203" fill="none" stroke="#9a9a9a" stroke-width="2.2"/></svg>
<div style="position:absolute;left:2238px;top:757px;width:297px;height:201px;overflow:hidden;background:linear-gradient(120deg,#5a9000 0%,#909a00 45%,#9a9000 60%,#9a6800 100%)"><div style="position:absolute;left:0;top:0;width:297px;height:201px;clip-path:polygon(0px 19.2px,297px 178.2px,297px 201px,0px 201px);background:linear-gradient(60deg,#d8ff40 0%,#ffff20 35%,#ffd000 70%,#ffb000 100%)"></div></div><canvas id="ins" width="297" height="201" style="left:2238px;top:757px;"></canvas>
<svg width="2560" height="1552" viewBox="0 0 2560 1552" style="pointer-events:none"><rect x="2374.5" y="845" width="19.5" height="19" fill="none" stroke="#ffffff" stroke-width="2.2"/>
<circle cx="2396.5" cy="857.5" r="6.2" fill="#c4c000" stroke="#000" stroke-width="1.8"/></svg>
<script>
(function(){
var L=[[0.25680,0.01659],[0.25679,0.01660],[0.25678,0.01660],[0.25677,0.01660],[0.25675,0.01661],[0.25673,0.01661],[0.25672,0.01662],[0.25670,0.01662],[0.25668,0.01661],[0.25666,0.01661],[0.25664,0.01659],[0.25662,0.01657],[0.25660,0.01654],[0.25658,0.01651],[0.25656,0.01647],[0.25654,0.01643],[0.25652,0.01639],[0.25649,0.01635],[0.25647,0.01632],[0.25644,0.01629],[0.25642,0.01627],[0.25639,0.01625],[0.25636,0.01625],[0.25633,0.01625],[0.25630,0.01626],[0.25626,0.01626],[0.25623,0.01627],[0.25619,0.01628],[0.25616,0.01628],[0.25612,0.01628],[0.25608,0.01626],[0.25605,0.01624],[0.25601,0.01621],[0.25598,0.01618],[0.25594,0.01614],[0.25590,0.01610],[0.25586,0.01606],[0.25582,0.01602],[0.25578,0.01599],[0.25574,0.01596],[0.25570,0.01594],[0.25565,0.01592],[0.25561,0.01591],[0.25556,0.01591],[0.25552,0.01591],[0.25547,0.01591],[0.25542,0.01592],[0.25537,0.01592],[0.25531,0.01593],[0.25526,0.01593],[0.25520,0.01593],[0.25514,0.01593],[0.25508,0.01593],[0.25502,0.01593],[0.25495,0.01593],[0.25489,0.01593],[0.25482,0.01593],[0.25475,0.01593],[0.25468,0.01593],[0.25461,0.01593],[0.25453,0.01593],[0.25446,0.01592],[0.25439,0.01591],[0.25432,0.01589],[0.25425,0.01588],[0.25417,0.01586],[0.25409,0.01585],[0.25401,0.01585],[0.25392,0.01586],[0.25381,0.01588],[0.25370,0.01592],[0.25359,0.01597],[0.25346,0.01603],[0.25334,0.01610],[0.25321,0.01618],[0.25307,0.01626],[0.25292,0.01636],[0.25276,0.01647],[0.25259,0.01659],[0.25240,0.01673],[0.25221,0.01688],[0.25200,0.01705],[0.25177,0.01723],[0.25154,0.01742],[0.25129,0.01763],[0.25104,0.01785],[0.25077,0.01808],[0.25049,0.01832],[0.25021,0.01858],[0.24992,0.01885],[0.24962,0.01913],[0.24931,0.01942],[0.24900,0.01972],[0.24868,0.02003],[0.24836,0.02035],[0.24802,0.02068],[0.24767,0.02103],[0.24731,0.02140],[0.24693,0.02179],[0.24654,0.02219],[0.24612,0.02262],[0.24568,0.02307],[0.24523,0.02354],[0.24476,0.02403],[0.24427,0.02454],[0.24377,0.02506],[0.24326,0.02561],[0.24273,0.02617],[0.24218,0.02674],[0.24163,0.02734],[0.24106,0.02795],[0.24049,0.02858],[0.23990,0.02922],[0.23930,0.02989],[0.23869,0.03057],[0.23806,0.03127],[0.23742,0.03199],[0.23677,0.03272],[0.23609,0.03347],[0.23540,0.03423],[0.23469,0.03501],[0.23396,0.03580],[0.23323,0.03660],[0.23247,0.03741],[0.23171,0.03824],[0.23092,0.03908],[0.23012,0.03995],[0.22929,0.04084],[0.22843,0.04175],[0.22755,0.04270],[0.22663,0.04368],[0.22568,0.04469],[0.22471,0.04573],[0.22371,0.04679],[0.22269,0.04788],[0.22164,0.04899],[0.22056,0.05013],[0.21947,0.05130],[0.21835,0.05249],[0.21722,0.05370],[0.21606,0.05495],[0.21489,0.05621],[0.21370,0.05748],[0.21249,0.05877],[0.21127,0.06008],[0.21002,0.06142],[0.20874,0.06280],[0.20744,0.06422],[0.20610,0.06568],[0.20474,0.06720],[0.20334,0.06878],[0.20191,0.07040],[0.20045,0.07205],[0.19897,0.07374],[0.19745,0.07548],[0.19591,0.07726],[0.19433,0.07910],[0.19273,0.08099],[0.19109,0.08296],[0.18942,0.08500],[0.18772,0.08711],[0.18600,0.08927],[0.18427,0.09144],[0.18252,0.09364],[0.18074,0.09590],[0.17892,0.09824],[0.17706,0.10068],[0.17514,0.10325],[0.17316,0.10597],[0.17110,0.10886],[0.16896,0.11195],[0.16674,0.11521],[0.16445,0.11861],[0.16209,0.12216],[0.15967,0.12585],[0.15718,0.12968],[0.15465,0.13365],[0.15207,0.13777],[0.14944,0.14203],[0.14677,0.14643],[0.14408,0.15098],[0.14133,0.15568],[0.13853,0.16053],[0.13567,0.16553],[0.13277,0.17068],[0.12982,0.17597],[0.12684,0.18139],[0.12383,0.18694],[0.12080,0.19263],[0.11775,0.19844],[0.11469,0.20437],[0.11160,0.21047],[0.10846,0.21674],[0.10527,0.22318],[0.10206,0.22976],[0.09884,0.23645],[0.09560,0.24323],[0.09237,0.25008],[0.08915,0.25698],[0.08597,0.26391],[0.08282,0.27083],[0.07967,0.27781],[0.07650,0.28490],[0.07331,0.29208],[0.07014,0.29932],[0.06698,0.30660],[0.06387,0.31389],[0.06081,0.32117],[0.05782,0.32841],[0.05493,0.33559],[0.05213,0.34269],[0.04943,0.34975],[0.04679,0.35684],[0.04421,0.36394],[0.04169,0.37101],[0.03925,0.37804],[0.03687,0.38500],[0.03457,0.39187],[0.03235,0.39862],[0.03021,0.40523],[0.02816,0.41168],[0.02618,0.41800],[0.02429,0.42424],[0.02246,0.43039],[0.02072,0.43644],[0.01905,0.44237],[0.01746,0.44817],[0.01595,0.45383],[0.01452,0.45934],[0.01316,0.46468],[0.01189,0.46984],[0.01070,0.47483],[0.00960,0.47965],[0.00859,0.48432],[0.00765,0.48884],[0.00679,0.49321],[0.00600,0.49744],[0.00528,0.50153],[0.00462,0.50550],[0.00402,0.50934],[0.00347,0.51307],[0.00299,0.51665],[0.00257,0.52008],[0.00223,0.52336],[0.00195,0.52650],[0.00173,0.52952],[0.00157,0.53243],[0.00146,0.53524],[0.00141,0.53796],[0.00140,0.54059],[0.00144,0.54316],[0.00153,0.54565],[0.00167,0.54802],[0.00187,0.55030],[0.00213,0.55248],[0.00244,0.55456],[0.00279,0.55657],[0.00319,0.55849],[0.00363,0.56034],[0.00412,0.56212],[0.00464,0.56384],[0.00521,0.56549],[0.00584,0.56705],[0.00651,0.56854],[0.00723,0.56995],[0.00799,0.57128],[0.00879,0.57254],[0.00962,0.57374],[0.01048,0.57488],[0.01137,0.57595],[0.01228,0.57697],[0.01323,0.57792],[0.01421,0.57879],[0.01523,0.57958],[0.01629,0.58031],[0.01737,0.58098],[0.01848,0.58160],[0.01961,0.58217],[0.02077,0.58270],[0.02193,0.58320],[0.02312,0.58367],[0.02432,0.58409],[0.02554,0.58446],[0.02680,0.58478],[0.02807,0.58505],[0.02936,0.58528],[0.03067,0.58549],[0.03199,0.58567],[0.03332,0.58583],[0.03466,0.58599],[0.03601,0.58614],[0.03737,0.58628],[0.03874,0.58640],[0.04013,0.58649],[0.04153,0.58656],[0.04295,0.58662],[0.04437,0.58666],[0.04579,0.58669],[0.04722,0.58672],[0.04864,0.58674],[0.05006,0.58675],[0.05147,0.58677],[0.05289,0.58677],[0.05431,0.58677],[0.05572,0.58675],[0.05714,0.58673],[0.05857,0.58670],[0.06000,0.58667],[0.06144,0.58663],[0.06288,0.58658],[0.06434,0.58652],[0.06579,0.58646],[0.06726,0.58639],[0.06872,0.58632],[0.07019,0.58624],[0.07167,0.58615],[0.07316,0.58605],[0.07465,0.58595],[0.07616,0.58585],[0.07769,0.58573],[0.07922,0.58562],[0.08078,0.58549],[0.08234,0.58536],[0.08391,0.58523],[0.08549,0.58508],[0.08709,0.58494],[0.08870,0.58478],[0.09032,0.58462],[0.09195,0.58446],[0.09360,0.58429],[0.09527,0.58411],[0.09695,0.58393],[0.09864,0.58375],[0.10034,0.58355],[0.10206,0.58336],[0.10379,0.58315],[0.10554,0.58295],[0.10730,0.58273],[0.10908,0.58252],[0.11088,0.58230],[0.11270,0.58207],[0.11454,0.58184],[0.11639,0.58160],[0.11826,0.58136],[0.12014,0.58112],[0.12204,0.58087],[0.12396,0.58061],[0.12590,0.58036],[0.12787,0.58009],[0.12985,0.57982],[0.13186,0.57955],[0.13389,0.57928],[0.13594,0.57900],[0.13801,0.57871],[0.14010,0.57842],[0.14221,0.57813],[0.14434,0.57783],[0.14650,0.57753],[0.14868,0.57722],[0.15088,0.57691],[0.15310,0.57659],[0.15535,0.57627],[0.15761,0.57594],[0.15990,0.57561],[0.16221,0.57528],[0.16455,0.57494],[0.16690,0.57460],[0.16928,0.57425],[0.17169,0.57390],[0.17413,0.57354],[0.17659,0.57318],[0.17907,0.57282],[0.18159,0.57245],[0.18412,0.57208],[0.18669,0.57171],[0.18927,0.57133],[0.19189,0.57094],[0.19452,0.57055],[0.19719,0.57016],[0.19988,0.56977],[0.20260,0.56936],[0.20534,0.56896],[0.20810,0.56855],[0.21090,0.56813],[0.21372,0.56771],[0.21656,0.56729],[0.21943,0.56686],[0.22233,0.56643],[0.22525,0.56599],[0.22820,0.56555],[0.23117,0.56511],[0.23417,0.56466],[0.23720,0.56421],[0.24025,0.56375],[0.24334,0.56329],[0.24644,0.56282],[0.24957,0.56235],[0.25273,0.56188],[0.25591,0.56140],[0.25912,0.56092],[0.26234,0.56044],[0.26560,0.55995],[0.26888,0.55946],[0.27219,0.55897],[0.27552,0.55847],[0.27888,0.55797],[0.28225,0.55746],[0.28565,0.55695],[0.28907,0.55644],[0.29251,0.55593],[0.29596,0.55541],[0.29943,0.55489],[0.30293,0.55437],[0.30646,0.55385],[0.31000,0.55332],[0.31356,0.55279],[0.31714,0.55226],[0.32072,0.55173],[0.32432,0.55119],[0.32792,0.55065],[0.33153,0.55012],[0.33515,0.54957],[0.33879,0.54903],[0.34245,0.54848],[0.34612,0.54792],[0.34980,0.54737],[0.35348,0.54682],[0.35715,0.54626],[0.36081,0.54571],[0.36445,0.54517],[0.36806,0.54463],[0.37165,0.54409],[0.37523,0.54355],[0.37880,0.54302],[0.38235,0.54249],[0.38590,0.54196],[0.38943,0.54143],[0.39296,0.54090],[0.39647,0.54038],[0.39998,0.53986],[0.40347,0.53933],[0.40697,0.53881],[0.41048,0.53829],[0.41399,0.53776],[0.41749,0.53724],[0.42097,0.53672],[0.42443,0.53620],[0.42787,0.53569],[0.43127,0.53518],[0.43463,0.53468],[0.43794,0.53419],[0.44121,0.53370],[0.44445,0.53322],[0.44766,0.53275],[0.45084,0.53228],[0.45399,0.53181],[0.45710,0.53135],[0.46017,0.53090],[0.46321,0.53045],[0.46621,0.53000],[0.46917,0.52956],[0.47210,0.52912],[0.47499,0.52869],[0.47785,0.52826],[0.48067,0.52784],[0.48345,0.52742],[0.48620,0.52701],[0.48890,0.52660],[0.49157,0.52620],[0.49419,0.52581],[0.49677,0.52542],[0.49930,0.52504],[0.50179,0.52466],[0.50424,0.52430],[0.50664,0.52394],[0.50901,0.52358],[0.51133,0.52323],[0.51362,0.52289],[0.51587,0.52255],[0.51808,0.52222],[0.52026,0.52189],[0.52239,0.52158],[0.52448,0.52126],[0.52653,0.52096],[0.52855,0.52066],[0.53052,0.52037],[0.53246,0.52008],[0.53437,0.51980],[0.53625,0.51952],[0.53810,0.51925],[0.53992,0.51898],[0.54171,0.51871],[0.54347,0.51845],[0.54519,0.51819],[0.54688,0.51794],[0.54854,0.51769],[0.55018,0.51744],[0.55179,0.51720],[0.55338,0.51696],[0.55495,0.51672],[0.55650,0.51649],[0.55804,0.51626],[0.55956,0.51603],[0.56105,0.51581],[0.56252,0.51559],[0.56397,0.51537],[0.56540,0.51515],[0.56680,0.51494],[0.56818,0.51474],[0.56954,0.51453],[0.57088,0.51433],[0.57220,0.51413],[0.57349,0.51394],[0.57476,0.51375],[0.57601,0.51356],[0.57724,0.51338],[0.57845,0.51319],[0.57963,0.51302],[0.58079,0.51284],[0.58192,0.51267],[0.58304,0.51251],[0.58412,0.51235],[0.58519,0.51219],[0.58623,0.51204],[0.58724,0.51189],[0.58823,0.51175],[0.58920,0.51161],[0.59015,0.51147],[0.59108,0.51133],[0.59198,0.51120],[0.59287,0.51107],[0.59373,0.51094],[0.59456,0.51082],[0.59537,0.51070],[0.59616,0.51058],[0.59692,0.51046],[0.59767,0.51035],[0.59840,0.51024],[0.59911,0.51013],[0.59981,0.51003],[0.60050,0.50993],[0.60117,0.50983],[0.60182,0.50973],[0.60245,0.50963],[0.60307,0.50954],[0.60367,0.50945],[0.60425,0.50936],[0.60482,0.50928],[0.60537,0.50919],[0.60591,0.50911],[0.60644,0.50903],[0.60695,0.50896],[0.60745,0.50888],[0.60793,0.50881],[0.60840,0.50874],[0.60885,0.50867],[0.60928,0.50861],[0.60971,0.50854],[0.61011,0.50848],[0.61050,0.50842],[0.61088,0.50837],[0.61123,0.50832],[0.61157,0.50827],[0.61188,0.50822],[0.61217,0.50817],[0.61246,0.50813],[0.61273,0.50809],[0.61299,0.50805],[0.61325,0.50801],[0.61351,0.50797],[0.61378,0.50793],[0.61404,0.50789],[0.61429,0.50786],[0.61455,0.50782],[0.61479,0.50778],[0.61503,0.50774],[0.61527,0.50771],[0.61550,0.50767],[0.61573,0.50764],[0.61595,0.50761],[0.61616,0.50758],[0.61637,0.50754],[0.61657,0.50751],[0.61676,0.50749],[0.61694,0.50746],[0.61713,0.50743],[0.61730,0.50740],[0.61748,0.50738],[0.61766,0.50735],[0.61784,0.50732],[0.61803,0.50730],[0.61821,0.50727],[0.61839,0.50724],[0.61856,0.50722],[0.61873,0.50719],[0.61891,0.50716],[0.61909,0.50714],[0.61928,0.50711],[0.61947,0.50708],[0.61968,0.50705],[0.61990,0.50702],[0.62014,0.50698],[0.62041,0.50694],[0.62070,0.50689],[0.62100,0.50685],[0.62131,0.50680],[0.62161,0.50676],[0.62189,0.50672],[0.62215,0.50668],[0.62239,0.50664],[0.62258,0.50661],[0.62274,0.50659],[0.62288,0.50657],[0.62299,0.50655],[0.62308,0.50654],[0.62316,0.50653],[0.62322,0.50652],[0.62327,0.50651],[0.62331,0.50650],[0.62335,0.50650],[0.62339,0.50649]]; var GAM=1.0;
function rgbOf(x,y,f){
  var X=x/y, Y=1, Z=(1-x-y)/y;
  var r= 3.2406*X-1.5372*Y-0.4986*Z;
  var g=-0.9689*X+1.8758*Y+0.0415*Z;
  var b= 0.0557*X-0.2040*Y+1.0570*Z;
  var out=(r<0||g<0||b<0);
  if(r<0)r=0; if(g<0)g=0; if(b<0)b=0;
  var m=Math.max(r,g,b); r/=m; g/=m; b/=m;
  r=Math.pow(r,GAM); g=Math.pow(g,GAM); b=Math.pow(b,GAM);
  var k=out?f:1;
  return [r*255*k,g*255*k,b*255*k];
}
function draw(){
  var cv=document.getElementById('cie'); if(!cv) return;
  var W=cv.width,H=cv.height, ox=1640-1640, oy=274.5;
  var off=document.createElement('canvas'); off.width=W; off.height=H;
  var oc=off.getContext('2d');
  var img=oc.createImageData(W,H), d=img.data;
  var SU=1501, SV=1157, X0=1640, Y0=968.5, CX=1640, CY=274;
  for(var j=0;j<H;j++){
    var v=(Y0-(CY+j+0.5))/SV;
    for(var i=0;i<W;i++){
      var u=((CX+i+0.5)-X0)/SU;
      var den=6*u-16*v+12; var x=9*u/den, y=4*v/den;
      var p=(j*W+i)*4;
      if(y<=0.0005){d[p+3]=0;continue;}
      var c=rgbOf(x,y,0.6);
      d[p]=c[0]; d[p+1]=c[1]; d[p+2]=c[2]; d[p+3]=255;
    }
  }
  oc.putImageData(img,0,0);
  oc.globalCompositeOperation='destination-in';
  oc.beginPath();
  for(var k=0;k<L.length;k++){
    var u=L[k][0], v=L[k][1];
    var px=X0+u*SU-CX, py=Y0-v*SV-CY;
    if(k==0) oc.moveTo(px,py); else oc.lineTo(px,py);
  }
  oc.closePath(); oc.fill();
  var ctx=cv.getContext('2d');
  ctx.fillStyle='#222222'; ctx.fillRect(0,0,W,H);
  ctx.drawImage(off,0,0);
  // inset
  var c2=document.getElementById('ins'); if(!c2) return;
  var W2=c2.width,H2=c2.height; var ctx2=c2.getContext('2d');
  var im2=ctx2.createImageData(W2,H2), d2=im2.data;
  var KX=0.00022, KY=0.000325, CX2=146, CY2=97.5, XC=0.4193, YC=0.5053;
  for(var j=0;j<H2;j++){ for(var i=0;i<W2;i++){
    var x=XC+(i+0.5-CX2)*KX, y=YC-(j+0.5-CY2)*KY;
    var c=rgbOf(x,y,0.6); var p=(j*W2+i)*4;
    d2[p]=c[0]; d2[p+1]=c[1]; d2[p+2]=c[2]; d2[p+3]=255;
  }}
  ctx2.putImageData(im2,0,0);
}
draw();
})();
</script>
</body></html>
